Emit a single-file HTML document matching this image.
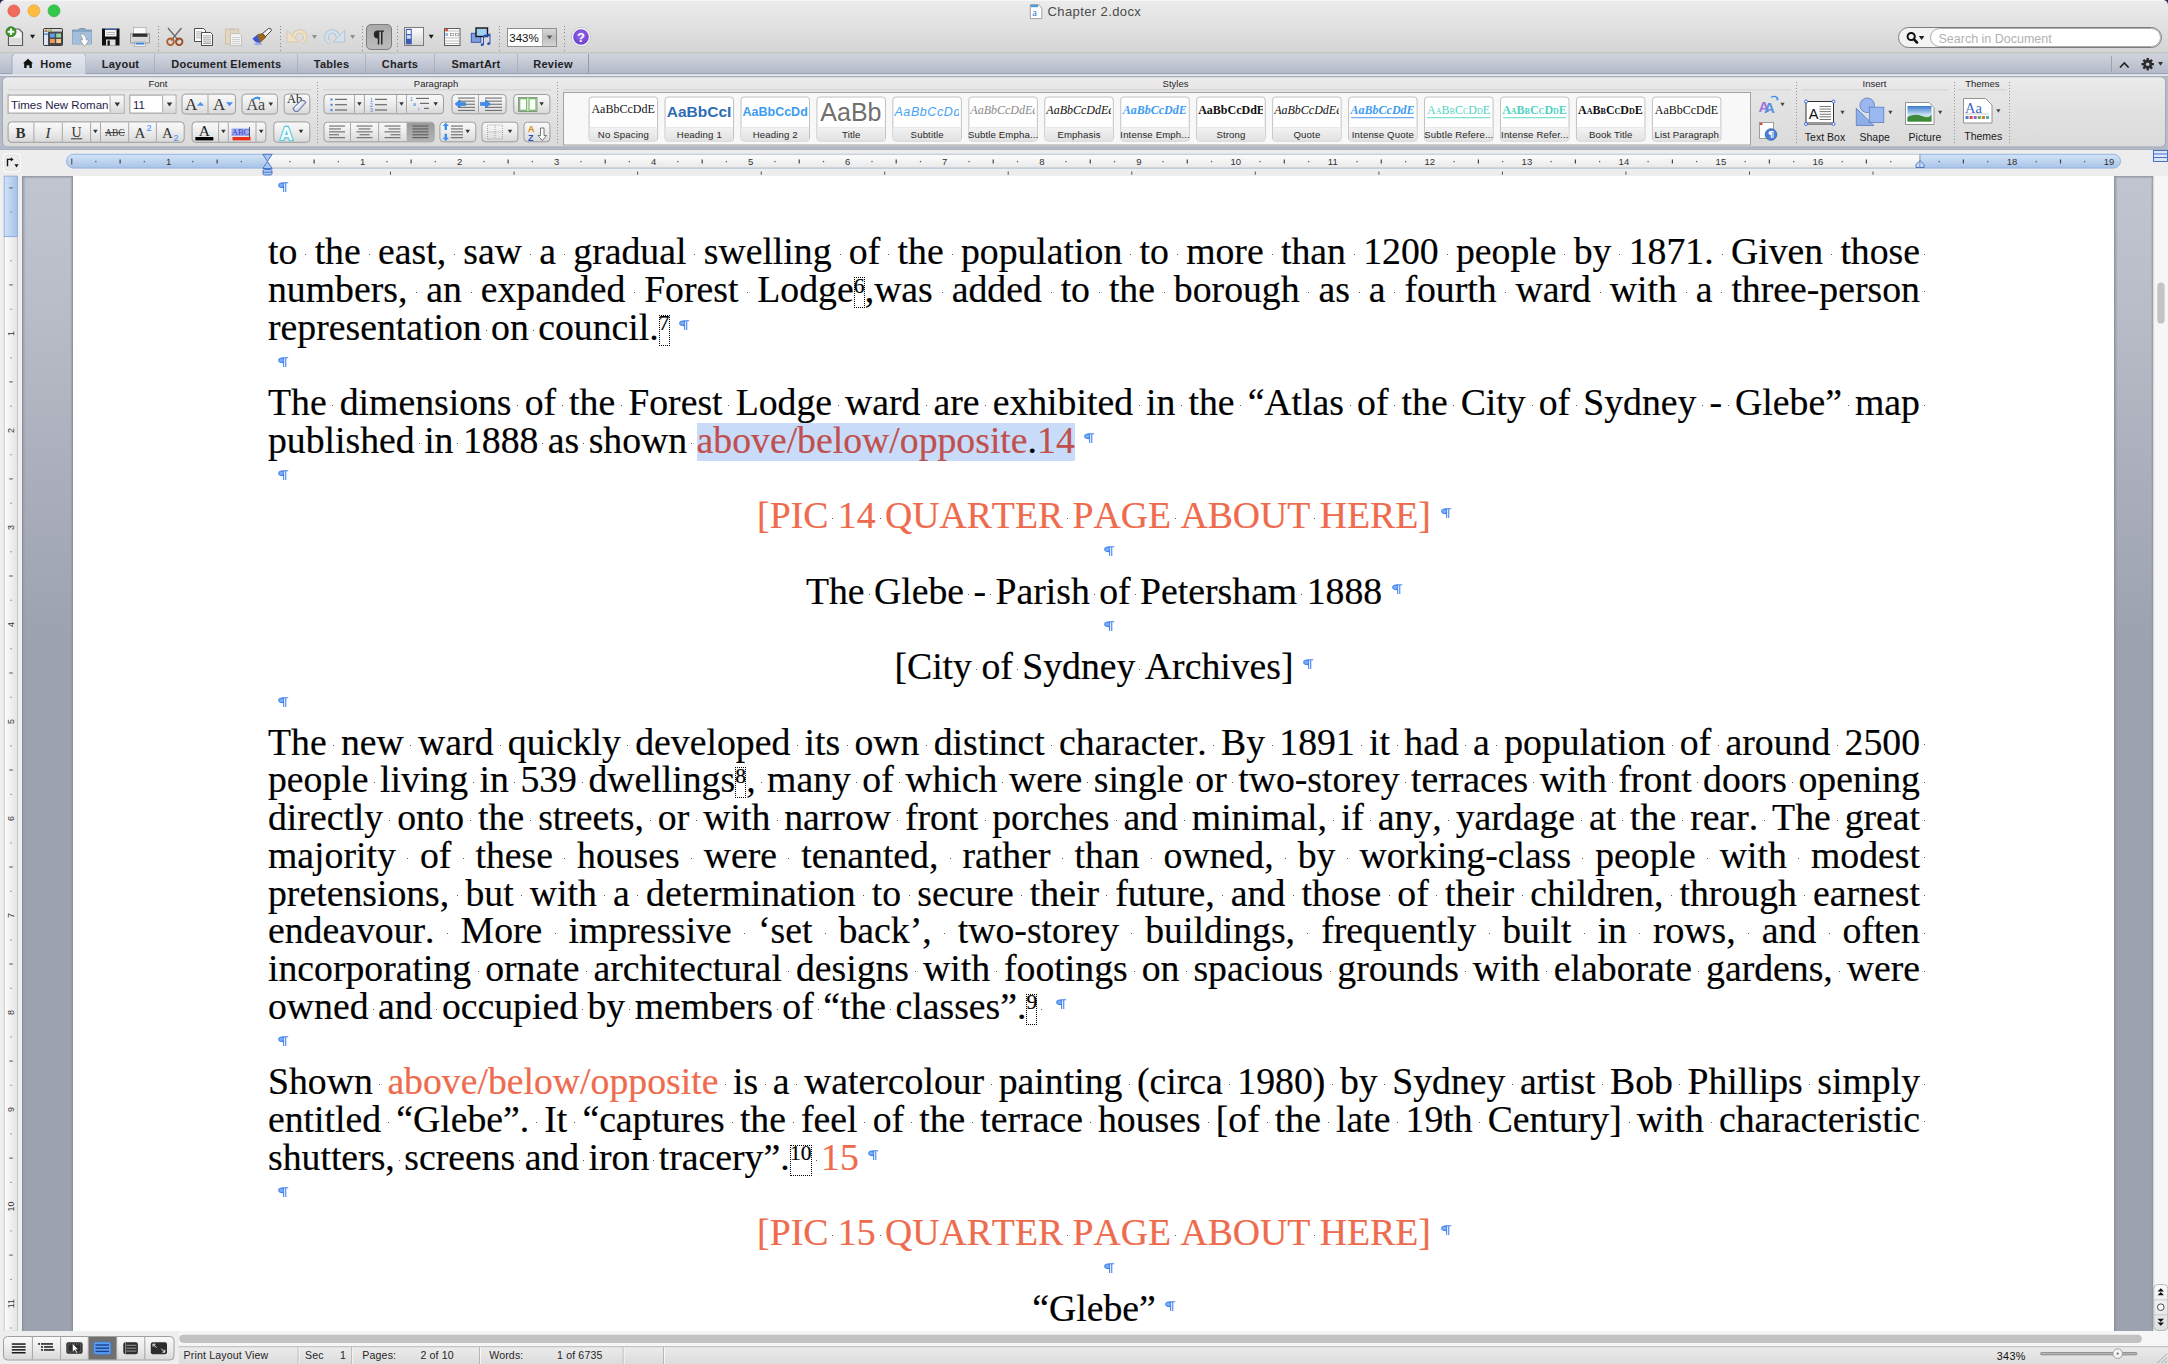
<!DOCTYPE html>
<html><head><meta charset="utf-8"><title>Chapter 2.docx</title>
<style>
*{box-sizing:border-box;margin:0;padding:0}
html,body{width:2168px;height:1364px;overflow:hidden;background:#fff}
body{position:relative;font-family:"Liberation Sans",sans-serif;color:#000}
.abs{position:absolute}
#top{position:absolute;left:0;top:0;width:2168px;height:54px;background:linear-gradient(#ececec,#e4e4e4 40%,#d3d3d3);border-bottom:1px solid #b4b4b4}
.tl{position:absolute;top:5px;width:12px;height:12px;border-radius:50%}
#title{position:absolute;top:3px;left:1047px;font-size:13px;color:#4a4a4a;letter-spacing:0.1px}
#tabs{position:absolute;left:0;top:54px;width:2168px;height:22px;background:linear-gradient(#d3d7df,#bcc1cd)}
.tab{position:absolute;top:0;height:20px;border:1px solid #a2a9b7;border-top:none;border-bottom:none;font-size:11px;font-weight:bold;color:#2b2b2b;text-align:center;line-height:20px;background:linear-gradient(#d8dce4,#bec3cf)}
.tab.act{background:linear-gradient(#e3e6ee,#cdd2dc);height:22px}
#rib{position:absolute;left:0;top:76px;width:2168px;height:74px;background:#b6bcc9;border-top:1px solid #aab1bf}
#panel{position:absolute;left:3px;top:1px;width:2162px;height:70px;border-radius:6px;border:1px solid #a8aebb;background:linear-gradient(#ececec,#e3e3e3 30%,#dcdcdc)}
.glab{position:absolute;top:2px;font-size:10.5px;color:#262626}
.gline{position:absolute;top:13px;height:1px;background:#cfcfcf}
.dsep{position:absolute;top:6px;height:62px;border-left:1px dotted #9c9c9c}
.btn{position:absolute;border:1px solid #a6a6a6;border-radius:4px;background:linear-gradient(#f8f8f8,#e9e9e9 50%,#d9d9d9);}
.dv{position:absolute;top:0;bottom:0;width:1px;background:#b3b3b3}
.combo{position:absolute;background:#fff;border:1px solid #a9a9a9;font-size:12px;color:#262658}
#ruler{position:absolute;left:0;top:150px;width:2168px;height:26px;background:#ededed}
#doc{position:absolute;left:0;top:176px;width:2168px;height:1156px;background:#fff;overflow:hidden}
#vrul{position:absolute;left:0;top:176px;width:22px;height:1156px;background:#efefef}
#gl{position:absolute;left:22px;top:176px;width:51px;height:1156px;background:linear-gradient(#c0c4cf,#a3a9b4);border-left:3px solid #9499a4;border-right:2px solid #9a9fab}
#gr{position:absolute;left:2114px;top:176px;width:39px;height:1156px;background:linear-gradient(#c0c4cf,#a3a9b4);border-left:3px solid #9499a4;border-right:2px solid #9a9fab}
#vscr{position:absolute;left:2153px;top:176px;width:15px;height:1156px;background:#f4f4f4;border-left:1px solid #dedede}
#status{position:absolute;left:0;top:1332px;width:2168px;height:32px;background:linear-gradient(#f1f1f1,#e4e4e4)}
.ln{-webkit-text-stroke:0.2px currentColor;font-kerning:none;position:absolute;left:268px;width:1652px;height:38px;line-height:38px;font-family:"Liberation Serif",serif;font-size:37.73px;white-space:nowrap;color:#000}
.lj{text-align:justify;text-align-last:justify;white-space:normal}
.lc{text-align:center;left:268px}
.cw{position:relative;display:inline-block}
.pma{position:absolute;left:100%;top:0;margin-left:11px}
.pm{display:inline-block;position:relative;width:11px;height:11px}
.pil{display:block;position:absolute}
.pm .pil{left:-0.3px;top:-9px}
.pma .pil{left:-1.3px;top:12px}
.pe{position:absolute;width:11px;height:11px}
.sp{background:linear-gradient(#5a5a5a,#5a5a5a) no-repeat;background-position:50% 23.8px;background-size:1.4px 1.4px}
.or{color:#ef6b4d}
.or2{color:#c0504d}
.sel{}
.fn{display:inline-block;position:relative;height:31px;vertical-align:-6px;outline:1px dotted #000;outline-offset:-1px;line-height:0}
.fn span{position:absolute;left:0;right:0;text-align:center;top:8.6px;font-size:21.5px}
</style></head><body>
<svg width="0" height="0" style="position:absolute"><defs>
<symbol id="pilc" viewBox="0 0 11 11"><path d="M5.6 0.3H10.2V1.3H8.3V10H7.2V1.3H6.2V10H5.1V6.2C2 6.2 0.1 5.1 0.1 3.2C0.1 1.3 2.3 0.3 5.6 0.3Z" fill="#4684ec"/><ellipse cx="3.3" cy="3.3" rx="2.1" ry="1.7" fill="#78adf8"/></symbol>
</defs></svg>
<svg class="abs" style="left:0;top:0" width="2168" height="176" viewBox="0 0 2168 176" font-family="Liberation Sans">
<defs>
<linearGradient id="gTop" x1="0" y1="0" x2="0" y2="1"><stop offset="0" stop-color="#ececec"/><stop offset="0.45" stop-color="#e2e2e2"/><stop offset="1" stop-color="#d4d4d4"/></linearGradient>
<linearGradient id="gPress" x1="0" y1="0" x2="0" y2="1"><stop offset="0" stop-color="#a9a9a9"/><stop offset="1" stop-color="#bcbcbc"/></linearGradient>
<linearGradient id="gSide" x1="0" y1="0" x2="0" y2="1"><stop offset="0" stop-color="#fff"/><stop offset="1" stop-color="#d4d4d4"/></linearGradient>
<linearGradient id="gZoomDD" x1="0" y1="0" x2="0" y2="1"><stop offset="0" stop-color="#d9d9d9"/><stop offset="0.5" stop-color="#bdbdbd"/><stop offset="1" stop-color="#d5d5d5"/></linearGradient>
<radialGradient id="gHelp" cx="0.5" cy="0.4" r="0.6"><stop offset="0" stop-color="#9b6cf0"/><stop offset="1" stop-color="#6a3ec9"/></radialGradient>
<linearGradient id="gTabBar" x1="0" y1="0" x2="0" y2="1"><stop offset="0" stop-color="#d1d5df"/><stop offset="1" stop-color="#afb5c4"/></linearGradient>
<linearGradient id="gTab" x1="0" y1="0" x2="0" y2="1"><stop offset="0" stop-color="#d3d7e1"/><stop offset="1" stop-color="#b1b7c6"/></linearGradient>
<linearGradient id="gTabA" x1="0" y1="0" x2="0" y2="1"><stop offset="0" stop-color="#e4e7ee"/><stop offset="1" stop-color="#cfd4de"/></linearGradient>
<linearGradient id="gPanel" x1="0" y1="0" x2="0" y2="1"><stop offset="0" stop-color="#ececec"/><stop offset="0.2" stop-color="#e6e6e6"/><stop offset="1" stop-color="#dadada"/></linearGradient>
<linearGradient id="gBtn" x1="0" y1="0" x2="0" y2="1"><stop offset="0" stop-color="#fafafa"/><stop offset="0.5" stop-color="#ececec"/><stop offset="1" stop-color="#d8d8d8"/></linearGradient>
<linearGradient id="gBtnA" x1="0" y1="0" x2="0" y2="1"><stop offset="0" stop-color="#9a9a9a"/><stop offset="1" stop-color="#b3b3b3"/></linearGradient>
<linearGradient id="gRulB" x1="0" y1="0" x2="0" y2="1"><stop offset="0" stop-color="#d3e4f8"/><stop offset="1" stop-color="#a9c3e7"/></linearGradient>
<linearGradient id="gRulW" x1="0" y1="0" x2="0" y2="1"><stop offset="0" stop-color="#fdfdfd"/><stop offset="1" stop-color="#e9e9e9"/></linearGradient>
<linearGradient id="gGray" x1="0" y1="0" x2="0" y2="1"><stop offset="0" stop-color="#c1c5cf"/><stop offset="1" stop-color="#9fa5b1"/></linearGradient>
<linearGradient id="gVRul" x1="0" y1="0" x2="1" y2="0"><stop offset="0" stop-color="#cfe2f8"/><stop offset="1" stop-color="#a6c1e6"/></linearGradient>
<linearGradient id="gLab" x1="0" y1="0" x2="0" y2="1"><stop offset="0" stop-color="#f3f3f3"/><stop offset="1" stop-color="#e2e2e2"/></linearGradient>
<linearGradient id="gPic" x1="0" y1="0" x2="0" y2="1"><stop offset="0" stop-color="#3a78c8"/><stop offset="0.6" stop-color="#cfe6f5"/><stop offset="1" stop-color="#6ab04a"/></linearGradient>
<linearGradient id="gStat" x1="0" y1="0" x2="0" y2="1"><stop offset="0" stop-color="#f0f0f0"/><stop offset="1" stop-color="#e2e2e2"/></linearGradient>
</defs>
<rect x="0" y="0" width="2168" height="53.5" fill="url(#gTop)"/>
<rect x="0" y="0" width="2168" height="1" fill="#f7f7f7"/>
<rect x="0" y="52.6" width="2168" height="1" fill="#adadad"/>
<path d="M0 0H4.5Q0.6 0.6 0 4.5Z" fill="#1f2350"/><path d="M2168 0H2163.5Q2167.4 0.6 2168 4.5Z" fill="#2a2a5a"/>
<circle cx="13.8" cy="10.9" r="5.9" fill="#f06c5c" stroke="#dc5040" stroke-width="0.7"/>
<circle cx="33.9" cy="10.8" r="6" fill="#fdbc40" stroke="#de9f34" stroke-width="0.6"/>
<circle cx="54" cy="10.8" r="6" fill="#34c84a" stroke="#27aa35" stroke-width="0.6"/>
<path d="M1030.3 4.6H1038.5L1041.8 8V18.6H1030.3Z" fill="#fff" stroke="#8a8a8a" stroke-width="0.8"/><rect x="1030.7" y="5" width="7.5" height="2.2" fill="#4a9ae0"/><text x="1032.3" y="16.3" font-family="Liberation Serif" font-size="10.5" fill="#3f7fd0">a</text>
<text x="1047.5" y="16" font-size="13" fill="#4b4b4b" letter-spacing="0.4">Chapter 2.docx</text>
<rect x="1898.5" y="27.5" width="263" height="20" rx="10" fill="#f3f3f3" stroke="#7c7c7c" stroke-width="1"/>
<rect x="1930.5" y="28.5" width="230" height="18" rx="9" fill="#fff" stroke="#9a9a9a" stroke-width="0.8"/>
<circle cx="1911.2" cy="36.5" r="3.6" fill="none" stroke="#111" stroke-width="2"/><path d="M1913.8 39.2L1917 42.5" stroke="#111" stroke-width="2.6" stroke-linecap="round"/>
<path d="M1918.8 36.0H1924.3999999999999L1921.6 40.0Z" fill="#222"/>
<text x="1938.5" y="43" font-size="12.5" fill="#b2b2b2">Search in Document</text>
<path d="M8.5 29H19L22.5 32.5V45.5H8.5Z" fill="#f4f4f4" stroke="#5a5a5a" stroke-width="1.2"/><path d="M9.5 38H21.5V44.5H9.5Z" fill="#dcdcdc"/><circle cx="11" cy="31.8" r="5" fill="#3f9a2a" stroke="#2b6e1c" stroke-width="0.8"/><path d="M10 28.5H12V30.8H14.3V32.8H12V35.1H10V32.8H7.7V30.8H10Z" fill="#fff"/><path d="M30.0 34.8H35.0L32.5 38.8Z" fill="#1a1a1a"/><rect x="43.5" y="28.5" width="19" height="17" rx="1" fill="#4a4a4a" stroke="#3a3a3a"/><rect x="44" y="29" width="18" height="2.6" fill="#d8d8d8"/><circle cx="46" cy="30.4" r="0.9" fill="#e24b2a"/><circle cx="48.5" cy="30.4" r="0.9" fill="#e8a020"/><circle cx="51" cy="30.4" r="0.9" fill="#4cae2c"/><rect x="44" y="32" width="4" height="13" fill="#dfe6f2"/><rect x="44" y="33.5" width="4" height="1.2" fill="#3a78d8"/><rect x="50" y="33.5" width="4.8" height="4" fill="#5a9ef0"/><rect x="56.2" y="33.5" width="4.8" height="4" fill="#8fd6a2"/><rect x="50" y="39" width="4.8" height="4" fill="#f09a5a"/><rect x="56.2" y="39" width="4.8" height="4" fill="#f5c98a"/><path d="M72.5 30H78L79.5 28.5H85L86 30H91.5V44H72.5Z" fill="#8aa9c9" stroke="#6f8fb0" stroke-width="0.8"/><path d="M72.5 32H91.5V44H72.5Z" fill="#a4bfdb"/><path d="M80 34C84 34 86 36 86.3 40H89L84.5 46.5L80 40H82.7C82.5 37.5 81.5 36 80 34Z" fill="#fff" stroke="#8b8b8b" stroke-width="0.6"/><path d="M102 28.5H119.5V45.5H102Z" fill="#111"/><rect x="105" y="28.5" width="11.5" height="8" fill="#f2f2f2"/><rect x="105" y="28.5" width="11.5" height="1.5" fill="#3b5aa0"/><rect x="106.5" y="32" width="8.5" height="0.8" fill="#aaa"/><rect x="106.5" y="34" width="8.5" height="0.8" fill="#aaa"/><rect x="106" y="39.5" width="9.5" height="6" fill="#e0e0e0"/><rect x="107.5" y="40.5" width="2.3" height="5" fill="#111"/><rect x="133.5" y="27.3" width="12.5" height="6" fill="#fafafa" stroke="#9a9a9a" stroke-width="0.6"/><path d="M130.5 33.5H149.5V43H130.5Z" fill="#d8d8d8" stroke="#8d8d8d" stroke-width="0.8"/><rect x="132.5" y="33.8" width="15" height="3" fill="#2e2e2e"/><rect x="134.5" y="42" width="11" height="4.2" fill="#fff" stroke="#8d8d8d" stroke-width="0.6"/><rect x="135.5" y="42.6" width="9" height="2" fill="#3a88d8"/><rect x="158" y="26" width="1" height="1.1" fill="#8a8a8a"/><rect x="158" y="29" width="1" height="1.1" fill="#8a8a8a"/><rect x="158" y="32" width="1" height="1.1" fill="#8a8a8a"/><rect x="158" y="36" width="1" height="1.1" fill="#8a8a8a"/><rect x="158" y="39" width="1" height="1.1" fill="#8a8a8a"/><rect x="158" y="43" width="1" height="1.1" fill="#8a8a8a"/><rect x="158" y="46" width="1" height="1.1" fill="#8a8a8a"/><rect x="158" y="50" width="1" height="1.1" fill="#8a8a8a"/><path d="M168 28L178.5 40.5M181.5 28L171 40.5" stroke="#6a6a6a" stroke-width="1.3"/><circle cx="170.5" cy="41.8" r="3.3" fill="none" stroke="#b5582a" stroke-width="1.8"/><circle cx="179.2" cy="41.8" r="3.3" fill="none" stroke="#9a4a22" stroke-width="1.8"/><path d="M194.5 28.5H203.5L205.5 30.5V41.5H194.5Z" fill="#fff" stroke="#3a3a3a" stroke-width="0.9"/><rect x="196" y="31.5" width="6" height="0.8" fill="#999"/><rect x="196" y="33.5" width="6" height="0.8" fill="#999"/><rect x="196" y="35.5" width="6" height="0.8" fill="#999"/><rect x="196" y="37.5" width="6" height="0.8" fill="#999"/><path d="M201.5 32.5H210.5L212.5 34.5V45.5H201.5Z" fill="#fff" stroke="#3a3a3a" stroke-width="0.9"/><rect x="203" y="35.5" width="8" height="0.8" fill="#888"/><rect x="203" y="37.5" width="8" height="0.8" fill="#888"/><rect x="203" y="39.5" width="8" height="0.8" fill="#888"/><rect x="203" y="41.5" width="8" height="0.8" fill="#888"/><rect x="203" y="43.2" width="8" height="0.8" fill="#888"/><rect x="225.3" y="29" width="13.5" height="15" fill="#e2d6bf" stroke="#c9bb9d" stroke-width="0.7"/><path d="M228.5 30.5H235.5L234.5 28.8H232.8L232 27.3L231.2 28.8H229.5Z" fill="#c8c8c8"/><path d="M230.5 33.5H239L241.5 36V45.5H230.5Z" fill="#f2f2f2" stroke="#b7b7b7" stroke-width="0.8"/><rect x="232" y="37" width="8" height="0.7" fill="#c3c3c3"/><rect x="232" y="39" width="8" height="0.7" fill="#c3c3c3"/><rect x="232" y="41" width="8" height="0.7" fill="#c3c3c3"/><rect x="232" y="43" width="8" height="0.7" fill="#c3c3c3"/><path d="M262.5 33.5L268.5 28.5Q271.5 28 271.5 30.5L265.5 36.5Z" fill="#f2f2f2" stroke="#333" stroke-width="0.9"/><path d="M257 35L262.5 33.5L266 37L260 42.5Z" fill="#9a6b1e" stroke="#5a3b10" stroke-width="0.6"/><path d="M252.5 38.5L257 35L260 42.5Q256 44 252.5 38.5Z" fill="#3a55d8"/><ellipse cx="258" cy="44" rx="4" ry="1.2" fill="#7a8ae8" opacity="0.6"/><rect x="280" y="26" width="1" height="1.1" fill="#8a8a8a"/><rect x="280" y="29" width="1" height="1.1" fill="#8a8a8a"/><rect x="280" y="32" width="1" height="1.1" fill="#8a8a8a"/><rect x="280" y="36" width="1" height="1.1" fill="#8a8a8a"/><rect x="280" y="39" width="1" height="1.1" fill="#8a8a8a"/><rect x="280" y="43" width="1" height="1.1" fill="#8a8a8a"/><rect x="280" y="46" width="1" height="1.1" fill="#8a8a8a"/><rect x="280" y="50" width="1" height="1.1" fill="#8a8a8a"/><path d="M294.2 38.3A5.6 5.6 0 1 1 302.3 42" fill="none" stroke="#d3c4a4" stroke-width="4.4"/><path d="M294.2 38.3A5.6 5.6 0 1 1 302.3 42" fill="none" stroke="#eee0c4" stroke-width="2.8"/><path d="M287 30.3V42H298.8Z" fill="#eee0c4" stroke="#d3c4a4" stroke-width="0.8" stroke-linejoin="round"/><path d="M312.0 35.0H317.0L314.5 39.0Z" fill="#8f8f8f"/><g transform="translate(631.8 0) scale(-1 1)"><path d="M294.2 38.3A5.6 5.6 0 1 1 302.3 42" fill="none" stroke="#a9bfd2" stroke-width="4.4"/><path d="M294.2 38.3A5.6 5.6 0 1 1 302.3 42" fill="none" stroke="#d3e2ee" stroke-width="2.8"/><path d="M287 30.3V42H298.8Z" fill="#d3e2ee" stroke="#a9bfd2" stroke-width="0.8" stroke-linejoin="round"/></g><path d="M350.1 35.0H355.1L352.6 39.0Z" fill="#8f8f8f"/><rect x="362" y="26" width="1" height="1.1" fill="#8a8a8a"/><rect x="362" y="29" width="1" height="1.1" fill="#8a8a8a"/><rect x="362" y="32" width="1" height="1.1" fill="#8a8a8a"/><rect x="362" y="36" width="1" height="1.1" fill="#8a8a8a"/><rect x="362" y="39" width="1" height="1.1" fill="#8a8a8a"/><rect x="362" y="43" width="1" height="1.1" fill="#8a8a8a"/><rect x="362" y="46" width="1" height="1.1" fill="#8a8a8a"/><rect x="362" y="50" width="1" height="1.1" fill="#8a8a8a"/><rect x="366.5" y="24.5" width="25" height="25" rx="4.5" fill="url(#gPress)" stroke="#7d7d7d" stroke-width="1"/><path d="M377.5 30.5H384V31.8H382.5V44.5H381V31.8H379.3V44.5H377.8V38.5Q373.8 38.5 373.8 34.5Q373.8 30.5 377.5 30.5Z" fill="#262626"/><rect x="397" y="26" width="1" height="1.1" fill="#8a8a8a"/><rect x="397" y="29" width="1" height="1.1" fill="#8a8a8a"/><rect x="397" y="32" width="1" height="1.1" fill="#8a8a8a"/><rect x="397" y="36" width="1" height="1.1" fill="#8a8a8a"/><rect x="397" y="39" width="1" height="1.1" fill="#8a8a8a"/><rect x="397" y="43" width="1" height="1.1" fill="#8a8a8a"/><rect x="397" y="46" width="1" height="1.1" fill="#8a8a8a"/><rect x="397" y="50" width="1" height="1.1" fill="#8a8a8a"/><rect x="404.5" y="27.5" width="19" height="18" fill="url(#gSide)" stroke="#7a7a7a" stroke-width="1"/><rect x="405.8" y="28.8" width="6" height="15.5" fill="#3d5db5"/><rect x="406.8" y="30" width="4" height="4" fill="#f2f4fa"/><rect x="406.8" y="35.2" width="4" height="3.5" fill="#d3dbef"/><path d="M428.7 34.8H433.7L431.2 38.8Z" fill="#1a1a1a"/><rect x="444.5" y="28.5" width="15.5" height="17" fill="#fff" stroke="#5d5d5d" stroke-width="1"/><rect x="445" y="30.5" width="14.5" height="1" fill="#bdbdbd"/><rect x="445" y="37.5" width="14.5" height="1" fill="#bdbdbd"/><rect x="445" y="40.5" width="14.5" height="1" fill="#bdbdbd"/><rect x="445" y="43" width="14.5" height="1" fill="#bdbdbd"/><rect x="445.3" y="29" width="2.6" height="2.2" fill="#e8451e"/><rect x="445.3" y="33" width="2.8" height="3" fill="#8fb8e8"/><rect x="450.5" y="33.3" width="3" height="2.5" fill="none" stroke="#777" stroke-width="0.6"/><rect x="455.5" y="33.3" width="3" height="2.5" fill="none" stroke="#777" stroke-width="0.6"/><rect x="471.3" y="33.3" width="9.5" height="9" fill="#7e9ee0" stroke="#2e4ea8" stroke-width="0.9"/><rect x="476" y="28" width="11.5" height="8.5" fill="#9fd0ef" stroke="#151515" stroke-width="1.4"/><path d="M486 34.5L490.5 33.5V43Q490.5 45 488.5 45Q486.8 45 487.2 43.5Q487.6 42 489.5 42.3V36L484 37.5V44.2Q484 46 482 46Q480.3 46 480.7 44.5Q481.2 43 483 43.3V35.5Z" fill="#2a4fb0"/><rect x="499" y="26" width="1" height="1.1" fill="#8a8a8a"/><rect x="499" y="29" width="1" height="1.1" fill="#8a8a8a"/><rect x="499" y="32" width="1" height="1.1" fill="#8a8a8a"/><rect x="499" y="36" width="1" height="1.1" fill="#8a8a8a"/><rect x="499" y="39" width="1" height="1.1" fill="#8a8a8a"/><rect x="499" y="43" width="1" height="1.1" fill="#8a8a8a"/><rect x="499" y="46" width="1" height="1.1" fill="#8a8a8a"/><rect x="499" y="50" width="1" height="1.1" fill="#8a8a8a"/><rect x="507.5" y="28.5" width="49" height="18" fill="#fff" stroke="#8e8e8e" stroke-width="1"/><rect x="542.5" y="29" width="13.5" height="17" fill="url(#gZoomDD)"/><rect x="542" y="29" width="1" height="17" fill="#b5b5b5"/><path d="M546.75 35.4H552.25L549.5 39.199999999999996Z" fill="#5a5a5a"/><text x="509.3" y="42" font-size="11.5" fill="#111">343%</text><rect x="564" y="26" width="1" height="1.1" fill="#8a8a8a"/><rect x="564" y="29" width="1" height="1.1" fill="#8a8a8a"/><rect x="564" y="32" width="1" height="1.1" fill="#8a8a8a"/><rect x="564" y="36" width="1" height="1.1" fill="#8a8a8a"/><rect x="564" y="39" width="1" height="1.1" fill="#8a8a8a"/><rect x="564" y="43" width="1" height="1.1" fill="#8a8a8a"/><rect x="564" y="46" width="1" height="1.1" fill="#8a8a8a"/><rect x="564" y="50" width="1" height="1.1" fill="#8a8a8a"/><circle cx="581" cy="37" r="9.6" fill="#fafafa" stroke="#bdbdbd" stroke-width="0.8"/><circle cx="581" cy="37" r="7.8" fill="url(#gHelp)"/><text x="581" y="41.6" font-size="13" font-weight="bold" fill="#fff" text-anchor="middle">?</text>
<rect x="0" y="53.5" width="2168" height="22.5" fill="url(#gTabBar)"/><path d="M12 75.5V56Q12 54 14 54H84Q86 54 86 56V75.5Z" fill="url(#gTabA)"/><path d="M12 75V56.5Q12 54.5 14 54.5M84 54.5Q86 54.5 86 56.5V75" fill="none" stroke="#a3aab9" stroke-width="1"/><text x="56.0" y="68" font-size="11" font-weight="bold" fill="#222" text-anchor="middle" letter-spacing="0.25">Home</text><rect x="86" y="54" width="69" height="19.5" fill="url(#gTab)"/><rect x="154.5" y="54" width="1" height="19.5" fill="#959cab"/><text x="120.5" y="68" font-size="11" font-weight="bold" fill="#222" text-anchor="middle" letter-spacing="0.25">Layout</text><rect x="155" y="54" width="142.5" height="19.5" fill="url(#gTab)"/><rect x="297.0" y="54" width="1" height="19.5" fill="#959cab"/><text x="226.25" y="68" font-size="11" font-weight="bold" fill="#222" text-anchor="middle" letter-spacing="0.25">Document Elements</text><rect x="297.5" y="54" width="68.0" height="19.5" fill="url(#gTab)"/><rect x="365.0" y="54" width="1" height="19.5" fill="#959cab"/><text x="331.5" y="68" font-size="11" font-weight="bold" fill="#222" text-anchor="middle" letter-spacing="0.25">Tables</text><rect x="365.5" y="54" width="69.0" height="19.5" fill="url(#gTab)"/><rect x="434.0" y="54" width="1" height="19.5" fill="#959cab"/><text x="400.0" y="68" font-size="11" font-weight="bold" fill="#222" text-anchor="middle" letter-spacing="0.25">Charts</text><rect x="434.5" y="54" width="83.0" height="19.5" fill="url(#gTab)"/><rect x="517.0" y="54" width="1" height="19.5" fill="#959cab"/><text x="476.0" y="68" font-size="11" font-weight="bold" fill="#222" text-anchor="middle" letter-spacing="0.25">SmartArt</text><rect x="517.5" y="54" width="71.0" height="19.5" fill="url(#gTab)"/><rect x="588.0" y="54" width="1" height="19.5" fill="#959cab"/><text x="553.0" y="68" font-size="11" font-weight="bold" fill="#222" text-anchor="middle" letter-spacing="0.25">Review</text><path d="M28 58.8L33 63.2H31.8V68H29.4V65.3H26.6V68H24.2V63.2H23Z" fill="#111"/><rect x="0" y="73" width="12" height="1.2" fill="#9ca3b6"/><rect x="86" y="73" width="2082" height="1.2" fill="#9ca3b6"/><rect x="0" y="74.2" width="2168" height="1.8" fill="#e4e6ee"/><rect x="2111" y="56" width="1" height="16" fill="#9ca3b1"/><path d="M2120 67.5L2124.3 63L2128.6 67.5" fill="none" stroke="#222" stroke-width="1.8"/><g transform="translate(2147.7 64.2)" fill="#2a2a2a"><rect x="-1.2" y="-6.2" width="2.4" height="3" transform="rotate(0)"/><rect x="-1.2" y="-6.2" width="2.4" height="3" transform="rotate(45)"/><rect x="-1.2" y="-6.2" width="2.4" height="3" transform="rotate(90)"/><rect x="-1.2" y="-6.2" width="2.4" height="3" transform="rotate(135)"/><rect x="-1.2" y="-6.2" width="2.4" height="3" transform="rotate(180)"/><rect x="-1.2" y="-6.2" width="2.4" height="3" transform="rotate(225)"/><rect x="-1.2" y="-6.2" width="2.4" height="3" transform="rotate(270)"/><rect x="-1.2" y="-6.2" width="2.4" height="3" transform="rotate(315)"/><circle r="4.4"/><circle r="1.8" fill="#c0c5d1"/></g><path d="M2158.0 61.9H2163.0L2160.5 65.7Z" fill="#333"/>
<rect x="0" y="76" width="2168" height="74" fill="#b5bbc8"/><rect x="0" y="76" width="2168" height="1" fill="#a8aebd"/><rect x="2.5" y="76.8" width="2163" height="70.2" rx="5" fill="url(#gPanel)" stroke="#a2a9b6" stroke-width="1"/><rect x="0" y="149" width="2168" height="1" fill="#a8afbd"/><text x="158" y="87.3" font-size="9.5" fill="#262626" text-anchor="middle">Font</text><rect x="8" y="89.3" width="303" height="1" fill="#d2d2d2"/><text x="436" y="87.3" font-size="9.5" fill="#262626" text-anchor="middle">Paragraph</text><rect x="323" y="89.3" width="228" height="1" fill="#d2d2d2"/><text x="1175.5" y="87.3" font-size="9.5" fill="#262626" text-anchor="middle">Styles</text><rect x="563" y="89.3" width="1228" height="1" fill="#d2d2d2"/><rect x="317" y="82" width="1" height="1.1" fill="#9a9a9a"/><rect x="317" y="85" width="1" height="1.1" fill="#9a9a9a"/><rect x="317" y="88" width="1" height="1.1" fill="#9a9a9a"/><rect x="317" y="91" width="1" height="1.1" fill="#9a9a9a"/><rect x="317" y="94" width="1" height="1.1" fill="#9a9a9a"/><rect x="317" y="97" width="1" height="1.1" fill="#9a9a9a"/><rect x="317" y="100" width="1" height="1.1" fill="#9a9a9a"/><rect x="317" y="103" width="1" height="1.1" fill="#9a9a9a"/><rect x="317" y="106" width="1" height="1.1" fill="#9a9a9a"/><rect x="317" y="109" width="1" height="1.1" fill="#9a9a9a"/><rect x="317" y="112" width="1" height="1.1" fill="#9a9a9a"/><rect x="317" y="115" width="1" height="1.1" fill="#9a9a9a"/><rect x="317" y="118" width="1" height="1.1" fill="#9a9a9a"/><rect x="317" y="121" width="1" height="1.1" fill="#9a9a9a"/><rect x="317" y="124" width="1" height="1.1" fill="#9a9a9a"/><rect x="317" y="127" width="1" height="1.1" fill="#9a9a9a"/><rect x="317" y="130" width="1" height="1.1" fill="#9a9a9a"/><rect x="317" y="133" width="1" height="1.1" fill="#9a9a9a"/><rect x="317" y="136" width="1" height="1.1" fill="#9a9a9a"/><rect x="317" y="139" width="1" height="1.1" fill="#9a9a9a"/><rect x="317" y="142" width="1" height="1.1" fill="#9a9a9a"/><rect x="557" y="82" width="1" height="1.1" fill="#9a9a9a"/><rect x="557" y="85" width="1" height="1.1" fill="#9a9a9a"/><rect x="557" y="88" width="1" height="1.1" fill="#9a9a9a"/><rect x="557" y="91" width="1" height="1.1" fill="#9a9a9a"/><rect x="557" y="94" width="1" height="1.1" fill="#9a9a9a"/><rect x="557" y="97" width="1" height="1.1" fill="#9a9a9a"/><rect x="557" y="100" width="1" height="1.1" fill="#9a9a9a"/><rect x="557" y="103" width="1" height="1.1" fill="#9a9a9a"/><rect x="557" y="106" width="1" height="1.1" fill="#9a9a9a"/><rect x="557" y="109" width="1" height="1.1" fill="#9a9a9a"/><rect x="557" y="112" width="1" height="1.1" fill="#9a9a9a"/><rect x="557" y="115" width="1" height="1.1" fill="#9a9a9a"/><rect x="557" y="118" width="1" height="1.1" fill="#9a9a9a"/><rect x="557" y="121" width="1" height="1.1" fill="#9a9a9a"/><rect x="557" y="124" width="1" height="1.1" fill="#9a9a9a"/><rect x="557" y="127" width="1" height="1.1" fill="#9a9a9a"/><rect x="557" y="130" width="1" height="1.1" fill="#9a9a9a"/><rect x="557" y="133" width="1" height="1.1" fill="#9a9a9a"/><rect x="557" y="136" width="1" height="1.1" fill="#9a9a9a"/><rect x="557" y="139" width="1" height="1.1" fill="#9a9a9a"/><rect x="557" y="142" width="1" height="1.1" fill="#9a9a9a"/><rect x="1796" y="82" width="1" height="1.1" fill="#9a9a9a"/><rect x="1796" y="85" width="1" height="1.1" fill="#9a9a9a"/><rect x="1796" y="88" width="1" height="1.1" fill="#9a9a9a"/><rect x="1796" y="91" width="1" height="1.1" fill="#9a9a9a"/><rect x="1796" y="94" width="1" height="1.1" fill="#9a9a9a"/><rect x="1796" y="97" width="1" height="1.1" fill="#9a9a9a"/><rect x="1796" y="100" width="1" height="1.1" fill="#9a9a9a"/><rect x="1796" y="103" width="1" height="1.1" fill="#9a9a9a"/><rect x="1796" y="106" width="1" height="1.1" fill="#9a9a9a"/><rect x="1796" y="109" width="1" height="1.1" fill="#9a9a9a"/><rect x="1796" y="112" width="1" height="1.1" fill="#9a9a9a"/><rect x="1796" y="115" width="1" height="1.1" fill="#9a9a9a"/><rect x="1796" y="118" width="1" height="1.1" fill="#9a9a9a"/><rect x="1796" y="121" width="1" height="1.1" fill="#9a9a9a"/><rect x="1796" y="124" width="1" height="1.1" fill="#9a9a9a"/><rect x="1796" y="127" width="1" height="1.1" fill="#9a9a9a"/><rect x="1796" y="130" width="1" height="1.1" fill="#9a9a9a"/><rect x="1796" y="133" width="1" height="1.1" fill="#9a9a9a"/><rect x="1796" y="136" width="1" height="1.1" fill="#9a9a9a"/><rect x="1796" y="139" width="1" height="1.1" fill="#9a9a9a"/><rect x="1796" y="142" width="1" height="1.1" fill="#9a9a9a"/><rect x="1954" y="82" width="1" height="1.1" fill="#9a9a9a"/><rect x="1954" y="85" width="1" height="1.1" fill="#9a9a9a"/><rect x="1954" y="88" width="1" height="1.1" fill="#9a9a9a"/><rect x="1954" y="91" width="1" height="1.1" fill="#9a9a9a"/><rect x="1954" y="94" width="1" height="1.1" fill="#9a9a9a"/><rect x="1954" y="97" width="1" height="1.1" fill="#9a9a9a"/><rect x="1954" y="100" width="1" height="1.1" fill="#9a9a9a"/><rect x="1954" y="103" width="1" height="1.1" fill="#9a9a9a"/><rect x="1954" y="106" width="1" height="1.1" fill="#9a9a9a"/><rect x="1954" y="109" width="1" height="1.1" fill="#9a9a9a"/><rect x="1954" y="112" width="1" height="1.1" fill="#9a9a9a"/><rect x="1954" y="115" width="1" height="1.1" fill="#9a9a9a"/><rect x="1954" y="118" width="1" height="1.1" fill="#9a9a9a"/><rect x="1954" y="121" width="1" height="1.1" fill="#9a9a9a"/><rect x="1954" y="124" width="1" height="1.1" fill="#9a9a9a"/><rect x="1954" y="127" width="1" height="1.1" fill="#9a9a9a"/><rect x="1954" y="130" width="1" height="1.1" fill="#9a9a9a"/><rect x="1954" y="133" width="1" height="1.1" fill="#9a9a9a"/><rect x="1954" y="136" width="1" height="1.1" fill="#9a9a9a"/><rect x="1954" y="139" width="1" height="1.1" fill="#9a9a9a"/><rect x="1954" y="142" width="1" height="1.1" fill="#9a9a9a"/><rect x="2009" y="82" width="1" height="1.1" fill="#9a9a9a"/><rect x="2009" y="85" width="1" height="1.1" fill="#9a9a9a"/><rect x="2009" y="88" width="1" height="1.1" fill="#9a9a9a"/><rect x="2009" y="91" width="1" height="1.1" fill="#9a9a9a"/><rect x="2009" y="94" width="1" height="1.1" fill="#9a9a9a"/><rect x="2009" y="97" width="1" height="1.1" fill="#9a9a9a"/><rect x="2009" y="100" width="1" height="1.1" fill="#9a9a9a"/><rect x="2009" y="103" width="1" height="1.1" fill="#9a9a9a"/><rect x="2009" y="106" width="1" height="1.1" fill="#9a9a9a"/><rect x="2009" y="109" width="1" height="1.1" fill="#9a9a9a"/><rect x="2009" y="112" width="1" height="1.1" fill="#9a9a9a"/><rect x="2009" y="115" width="1" height="1.1" fill="#9a9a9a"/><rect x="2009" y="118" width="1" height="1.1" fill="#9a9a9a"/><rect x="2009" y="121" width="1" height="1.1" fill="#9a9a9a"/><rect x="2009" y="124" width="1" height="1.1" fill="#9a9a9a"/><rect x="2009" y="127" width="1" height="1.1" fill="#9a9a9a"/><rect x="2009" y="130" width="1" height="1.1" fill="#9a9a9a"/><rect x="2009" y="133" width="1" height="1.1" fill="#9a9a9a"/><rect x="2009" y="136" width="1" height="1.1" fill="#9a9a9a"/><rect x="2009" y="139" width="1" height="1.1" fill="#9a9a9a"/><rect x="2009" y="142" width="1" height="1.1" fill="#9a9a9a"/><rect x="8.1" y="95.1" width="115.9" height="18.0" fill="#fff" stroke="#9a9a9a"/><rect x="110" y="95.6" width="13.5" height="17.0" fill="url(#gBtn)"/><rect x="109.5" y="95.6" width="1" height="17.0" fill="#b0b0b0"/><path d="M114.5 102.6H120.0L117.25 106.6Z" fill="#333"/><text x="11.1" y="108.6" font-size="11.5" fill="#1d1d4a">Times New Roman</text><rect x="129.9" y="95.1" width="46.0" height="18.0" fill="#fff" stroke="#9a9a9a"/><rect x="162.6" y="95.6" width="12.800000000000011" height="17.0" fill="url(#gBtn)"/><rect x="162.1" y="95.6" width="1" height="17.0" fill="#b0b0b0"/><path d="M166.75 102.6H172.25L169.5 106.6Z" fill="#333"/><text x="132.9" y="108.6" font-size="11.5" fill="#1d1d4a">11</text><rect x="182.0" y="94.1" width="53.5" height="20.0" rx="3.5" fill="url(#gBtn)" stroke="#9d9d9d" stroke-width="1"/><rect x="207.5" y="94.6" width="1" height="19.0" fill="#a8a8a8"/><text x="185" y="110.3" font-family="Liberation Serif" font-size="17" fill="#333">A</text><path d="M197 105.8L200.5 102L204 105.8Z" fill="#4a90ec"/><text x="213" y="110.3" font-family="Liberation Serif" font-size="17" fill="#333">A</text><path d="M226 102.3H233L229.5 106.2Z" fill="#4a90ec"/><rect x="242.0" y="94.1" width="35.5" height="20.0" rx="3.5" fill="url(#gBtn)" stroke="#9d9d9d" stroke-width="1"/><text x="246.5" y="110.3" font-family="Liberation Serif" font-size="16" fill="#444">Aa</text><path d="M252.5 100Q256 96.5 259.5 98.5" fill="none" stroke="#3d8ef0" stroke-width="1.8"/><path d="M257.3 96.6L260.5 97.4L259.3 101Z" fill="#3d8ef0"/><path d="M268.55 102.5H273.05L270.8 106.1Z" fill="#333"/><rect x="284.2" y="94.1" width="25.600000000000023" height="20.0" rx="3.5" fill="url(#gBtn)" stroke="#9d9d9d" stroke-width="1"/><text x="287" y="103.3" font-family="Liberation Serif" font-size="12.5" fill="#222">Ab</text><path d="M293.2 108.5L301 100.8Q304.3 99.3 305.8 102.5L298 111Q294.5 112.8 293.2 108.5Z" fill="#dde3f2" stroke="#6d7aa8" stroke-width="1.1"/><path d="M295 108.3L301.5 102" stroke="#fff" stroke-width="1.3"/><rect x="8.1" y="121.9" width="176.1" height="20.400000000000006" rx="3.5" fill="url(#gBtn)" stroke="#9d9d9d" stroke-width="1"/><rect x="33.4" y="122.4" width="1" height="19.400000000000006" fill="#a8a8a8"/><rect x="61.8" y="122.4" width="1" height="19.400000000000006" fill="#a8a8a8"/><rect x="90.1" y="122.4" width="1" height="19.400000000000006" fill="#a8a8a8"/><rect x="100.0" y="122.4" width="1" height="19.400000000000006" fill="#a8a8a8"/><rect x="128.2" y="122.4" width="1" height="19.400000000000006" fill="#a8a8a8"/><rect x="155.9" y="122.4" width="1" height="19.400000000000006" fill="#a8a8a8"/><text x="20.5" y="137.5" font-family="Liberation Serif" font-size="15" font-weight="bold" fill="#333" text-anchor="middle">B</text><text x="48" y="137.5" font-family="Liberation Serif" font-size="15" font-style="italic" fill="#333" text-anchor="middle">I</text><text x="76.5" y="136.5" font-family="Liberation Serif" font-size="14" fill="#333" text-anchor="middle">U</text><rect x="71" y="138.3" width="11.2" height="1" fill="#333"/><path d="M93.15 129.7H97.65L95.4 133.3Z" fill="#333"/><text x="114.8" y="136" font-family="Liberation Serif" font-size="9.5" fill="#333" text-anchor="middle">ABC</text><rect x="105" y="132.2" width="20" height="0.9" fill="#333"/><text x="140" y="138" font-family="Liberation Serif" font-size="15" fill="#333" text-anchor="middle">A</text><text x="146.5" y="130.5" font-size="9" fill="#3d8ef0">2</text><text x="167.5" y="138" font-family="Liberation Serif" font-size="15" fill="#333" text-anchor="middle">A</text><text x="173.5" y="140.5" font-size="9" fill="#3d8ef0">2</text><rect x="192.1" y="121.9" width="73.79999999999998" height="20.400000000000006" rx="3.5" fill="url(#gBtn)" stroke="#9d9d9d" stroke-width="1"/><rect x="218.1" y="122.4" width="1" height="19.400000000000006" fill="#a8a8a8"/><rect x="227.8" y="122.4" width="1" height="19.400000000000006" fill="#a8a8a8"/><rect x="255.5" y="122.4" width="1" height="19.400000000000006" fill="#a8a8a8"/><text x="204.3" y="135.8" font-family="Liberation Serif" font-size="15.5" fill="#222" text-anchor="middle">A</text><rect x="195.3" y="137" width="18" height="3.4" fill="#000"/><path d="M221.15 129.7H225.65L223.4 133.3Z" fill="#333"/><rect x="231.5" y="128.5" width="18" height="7.5" fill="#9eaef5"/><text x="240.5" y="134.8" font-family="Liberation Serif" font-size="8.5" fill="#3040c0" text-anchor="middle">ABC</text><rect x="232.5" y="137" width="18" height="3.4" fill="#e8301c"/><rect x="249" y="127" width="0.8" height="10" fill="#333"/><path d="M258.95 129.7H263.45L261.2 133.3Z" fill="#333"/><rect x="273.8" y="121.9" width="36.0" height="20.400000000000006" rx="3.5" fill="url(#gBtn)" stroke="#9d9d9d" stroke-width="1"/><text x="286.3" y="139.5" font-size="17.5" font-weight="bold" fill="#fff" stroke="#5cd0e2" stroke-width="2.6" paint-order="stroke" text-anchor="middle">A</text><path d="M298.75 129.7H303.25L301 133.3Z" fill="#333"/><rect x="324.0" y="94.5" width="119.5" height="19.299999999999997" rx="3.5" fill="url(#gBtn)" stroke="#9d9d9d" stroke-width="1"/><rect x="354.0" y="95" width="1" height="18.299999999999997" fill="#a8a8a8"/><rect x="363.9" y="95" width="1" height="18.299999999999997" fill="#a8a8a8"/><rect x="396.1" y="95" width="1" height="18.299999999999997" fill="#a8a8a8"/><rect x="406.0" y="95" width="1" height="18.299999999999997" fill="#a8a8a8"/><rect x="330.5" y="98.5" width="2" height="2" fill="#3d7ee8"/><rect x="335" y="98.8" width="12" height="1.2" fill="#6d6d6d"/><rect x="330.5" y="103.8" width="2" height="2" fill="#3d7ee8"/><rect x="335" y="104.1" width="12" height="1.2" fill="#6d6d6d"/><rect x="330.5" y="109.1" width="2" height="2" fill="#3d7ee8"/><rect x="335" y="109.4" width="12" height="1.2" fill="#6d6d6d"/><path d="M357.15 102.2H361.65L359.4 105.8Z" fill="#333"/><text x="370" y="101.5" font-size="5" fill="#3d7ee8">1</text><rect x="375" y="98.8" width="12" height="1.2" fill="#6d6d6d"/><text x="370" y="106.8" font-size="5" fill="#3d7ee8">2</text><rect x="375" y="104.1" width="12" height="1.2" fill="#6d6d6d"/><text x="370" y="112.1" font-size="5" fill="#3d7ee8">3</text><rect x="375" y="109.4" width="12" height="1.2" fill="#6d6d6d"/><path d="M399.25 102.2H403.75L401.5 105.8Z" fill="#333"/><text x="410" y="101" font-size="5" fill="#3d7ee8">1</text><text x="413" y="106" font-size="5" fill="#3d7ee8">a</text><text x="418" y="111" font-size="5" fill="#3d7ee8">i</text><rect x="416" y="97.8" width="13" height="1.2" fill="#6d6d6d"/><rect x="420" y="102.8" width="9" height="1.2" fill="#6d6d6d"/><rect x="424" y="107.8" width="5" height="1.2" fill="#6d6d6d"/><path d="M433.45 102.2H437.95L435.7 105.8Z" fill="#333"/><rect x="452.0" y="94.5" width="54.10000000000002" height="19.299999999999997" rx="3.5" fill="url(#gBtn)" stroke="#9d9d9d" stroke-width="1"/><rect x="478.0" y="95" width="1" height="18.299999999999997" fill="#a8a8a8"/><rect x="458" y="97.50" width="17" height="1.1" fill="#707070"/><rect x="458" y="100.60" width="17" height="1.1" fill="#707070"/><rect x="458" y="103.70" width="17" height="1.1" fill="#707070"/><rect x="458" y="106.80" width="17" height="1.1" fill="#707070"/><rect x="458" y="109.90" width="17" height="1.1" fill="#707070"/><path d="M455 103.9L460 99.8V102.4H465.5V105.4H460V108Z" fill="#3d8ef0" stroke="#2a63c0" stroke-width="0.5"/><rect x="485" y="97.50" width="17" height="1.1" fill="#707070"/><rect x="485" y="100.60" width="17" height="1.1" fill="#707070"/><rect x="485" y="103.70" width="17" height="1.1" fill="#707070"/><rect x="485" y="106.80" width="17" height="1.1" fill="#707070"/><rect x="485" y="109.90" width="17" height="1.1" fill="#707070"/><path d="M490.5 103.9L485.5 99.8V102.4H480.5V105.4H485.5V108Z" fill="#3d8ef0" stroke="#2a63c0" stroke-width="0.5"/><rect x="513.7" y="94.5" width="36.19999999999993" height="19.299999999999997" rx="3.5" fill="url(#gBtn)" stroke="#9d9d9d" stroke-width="1"/><rect x="518.5" y="97.5" width="18.5" height="14" fill="#fff" stroke="#6a6a6a" stroke-width="0.7"/><rect x="519.7" y="98.7" width="7" height="11.6" fill="none" stroke="#5cb548" stroke-width="1.1"/><rect x="529" y="98.7" width="7" height="11.6" fill="none" stroke="#5cb548" stroke-width="1.1"/><path d="M539.35 102.2H543.85L541.6 105.8Z" fill="#333"/><rect x="324.0" y="122.2" width="110.19999999999999" height="19.60000000000001" rx="3.5" fill="url(#gBtn)" stroke="#9d9d9d" stroke-width="1"/><path d="M406.6 122.7H431.7Q434.2 122.7 434.2 125.7V138.3Q434.2 141.3 431.7 141.3H406.6Z" fill="url(#gBtnA)"/><rect x="350.0" y="122.7" width="1" height="18.60000000000001" fill="#a8a8a8"/><rect x="378.1" y="122.7" width="1" height="18.60000000000001" fill="#a8a8a8"/><rect x="329" y="125.50" width="16" height="1.1" fill="#6a6a6a"/><rect x="329" y="128.40" width="12" height="1.1" fill="#6a6a6a"/><rect x="329" y="131.30" width="16" height="1.1" fill="#6a6a6a"/><rect x="329" y="134.20" width="10" height="1.1" fill="#6a6a6a"/><rect x="329" y="137.10" width="16" height="1.1" fill="#6a6a6a"/><rect x="356.5" y="125.50" width="16" height="1.1" fill="#6a6a6a"/><rect x="358.5" y="128.40" width="12" height="1.1" fill="#6a6a6a"/><rect x="356.5" y="131.30" width="16" height="1.1" fill="#6a6a6a"/><rect x="359.5" y="134.20" width="10" height="1.1" fill="#6a6a6a"/><rect x="356.5" y="137.10" width="16" height="1.1" fill="#6a6a6a"/><rect x="384.5" y="125.50" width="16" height="1.1" fill="#6a6a6a"/><rect x="388.5" y="128.40" width="12" height="1.1" fill="#6a6a6a"/><rect x="384.5" y="131.30" width="16" height="1.1" fill="#6a6a6a"/><rect x="390.5" y="134.20" width="10" height="1.1" fill="#6a6a6a"/><rect x="384.5" y="137.10" width="16" height="1.1" fill="#6a6a6a"/><rect x="412.5" y="125.50" width="16" height="1.1" fill="#5a5a5a"/><rect x="412.5" y="128.40" width="16" height="1.1" fill="#5a5a5a"/><rect x="412.5" y="131.30" width="16" height="1.1" fill="#5a5a5a"/><rect x="412.5" y="134.20" width="16" height="1.1" fill="#5a5a5a"/><rect x="412.5" y="137.10" width="16" height="1.1" fill="#5a5a5a"/><rect x="439.9" y="122.2" width="35.900000000000034" height="19.60000000000001" rx="3.5" fill="url(#gBtn)" stroke="#9d9d9d" stroke-width="1"/><path d="M445.8 122.8L449 126H447V130H444.6V126H442.6Z" fill="#3d8ef0"/><path d="M445.8 141L449 137.8H447V133.8H444.6V137.8H442.6Z" fill="#3d8ef0"/><rect x="451" y="125.50" width="12" height="1.1" fill="#6a6a6a"/><rect x="451" y="128.40" width="12" height="1.1" fill="#6a6a6a"/><rect x="451" y="131.30" width="12" height="1.1" fill="#6a6a6a"/><rect x="451" y="134.20" width="12" height="1.1" fill="#6a6a6a"/><rect x="451" y="137.10" width="12" height="1.1" fill="#6a6a6a"/><path d="M465.45 129.7H469.95L467.7 133.3Z" fill="#333"/><rect x="482.0" y="122.2" width="35.89999999999998" height="19.60000000000001" rx="3.5" fill="url(#gBtn)" stroke="#9d9d9d" stroke-width="1"/><rect x="487.5" y="125" width="15" height="14" fill="none" stroke="#999" stroke-width="0.8" stroke-dasharray="1 1"/><path d="M495 125V139M487.5 132H502.5" stroke="#999" stroke-width="0.8" stroke-dasharray="1 1"/><path d="M507.75 129.7H512.25L510 133.3Z" fill="#333"/><rect x="524.0" y="122.2" width="25.899999999999977" height="19.60000000000001" rx="3.5" fill="url(#gBtn)" stroke="#9d9d9d" stroke-width="1"/><text x="528" y="132" font-size="9" font-weight="bold" fill="#d88a10">A</text><text x="528" y="141" font-size="9" font-weight="bold" fill="#2a50c8">Z</text><path d="M540.5 128V135.5H538L542.3 140.5L546.5 135.5H544V128Z" fill="#fff" stroke="#555" stroke-width="0.8"/><rect x="563.5" y="92.5" width="1187" height="52.5" fill="#f8f8f8" stroke="#a3a3a3" stroke-width="1"/><rect x="589.10" y="97" width="68.5" height="44" rx="3" fill="#fff" stroke="#c2c2c2" stroke-width="1"/><rect x="589.60" y="127" width="67.5" height="13.5" fill="url(#gLab)"/><rect x="589.60" y="127" width="67.5" height="0.8" fill="#e6e6e6"/><text x="623.40" y="138.3" font-size="9.6" fill="#262626" text-anchor="middle" letter-spacing="0.15">No Spacing</text><rect x="665.05" y="97" width="68.5" height="44" rx="3" fill="#fff" stroke="#c2c2c2" stroke-width="1"/><rect x="665.55" y="127" width="67.5" height="13.5" fill="url(#gLab)"/><rect x="665.55" y="127" width="67.5" height="0.8" fill="#e6e6e6"/><text x="699.35" y="138.3" font-size="9.6" fill="#262626" text-anchor="middle" letter-spacing="0.15">Heading 1</text><rect x="741.00" y="97" width="68.5" height="44" rx="3" fill="#fff" stroke="#c2c2c2" stroke-width="1"/><rect x="741.50" y="127" width="67.5" height="13.5" fill="url(#gLab)"/><rect x="741.50" y="127" width="67.5" height="0.8" fill="#e6e6e6"/><text x="775.30" y="138.3" font-size="9.6" fill="#262626" text-anchor="middle" letter-spacing="0.15">Heading 2</text><rect x="816.95" y="97" width="68.5" height="44" rx="3" fill="#fff" stroke="#c2c2c2" stroke-width="1"/><rect x="817.45" y="127" width="67.5" height="13.5" fill="url(#gLab)"/><rect x="817.45" y="127" width="67.5" height="0.8" fill="#e6e6e6"/><text x="851.25" y="138.3" font-size="9.6" fill="#262626" text-anchor="middle" letter-spacing="0.15">Title</text><rect x="892.90" y="97" width="68.5" height="44" rx="3" fill="#fff" stroke="#c2c2c2" stroke-width="1"/><rect x="893.40" y="127" width="67.5" height="13.5" fill="url(#gLab)"/><rect x="893.40" y="127" width="67.5" height="0.8" fill="#e6e6e6"/><text x="927.20" y="138.3" font-size="9.6" fill="#262626" text-anchor="middle" letter-spacing="0.15">Subtitle</text><rect x="968.85" y="97" width="68.5" height="44" rx="3" fill="#fff" stroke="#c2c2c2" stroke-width="1"/><rect x="969.35" y="127" width="67.5" height="13.5" fill="url(#gLab)"/><rect x="969.35" y="127" width="67.5" height="0.8" fill="#e6e6e6"/><text x="1003.15" y="138.3" font-size="9.6" fill="#262626" text-anchor="middle" letter-spacing="0.15">Subtle Empha...</text><rect x="1044.80" y="97" width="68.5" height="44" rx="3" fill="#fff" stroke="#c2c2c2" stroke-width="1"/><rect x="1045.30" y="127" width="67.5" height="13.5" fill="url(#gLab)"/><rect x="1045.30" y="127" width="67.5" height="0.8" fill="#e6e6e6"/><text x="1079.10" y="138.3" font-size="9.6" fill="#262626" text-anchor="middle" letter-spacing="0.15">Emphasis</text><rect x="1120.75" y="97" width="68.5" height="44" rx="3" fill="#fff" stroke="#c2c2c2" stroke-width="1"/><rect x="1121.25" y="127" width="67.5" height="13.5" fill="url(#gLab)"/><rect x="1121.25" y="127" width="67.5" height="0.8" fill="#e6e6e6"/><text x="1155.05" y="138.3" font-size="9.6" fill="#262626" text-anchor="middle" letter-spacing="0.15">Intense Emph...</text><rect x="1196.70" y="97" width="68.5" height="44" rx="3" fill="#fff" stroke="#c2c2c2" stroke-width="1"/><rect x="1197.20" y="127" width="67.5" height="13.5" fill="url(#gLab)"/><rect x="1197.20" y="127" width="67.5" height="0.8" fill="#e6e6e6"/><text x="1231.00" y="138.3" font-size="9.6" fill="#262626" text-anchor="middle" letter-spacing="0.15">Strong</text><rect x="1272.65" y="97" width="68.5" height="44" rx="3" fill="#fff" stroke="#c2c2c2" stroke-width="1"/><rect x="1273.15" y="127" width="67.5" height="13.5" fill="url(#gLab)"/><rect x="1273.15" y="127" width="67.5" height="0.8" fill="#e6e6e6"/><text x="1306.95" y="138.3" font-size="9.6" fill="#262626" text-anchor="middle" letter-spacing="0.15">Quote</text><rect x="1348.60" y="97" width="68.5" height="44" rx="3" fill="#fff" stroke="#c2c2c2" stroke-width="1"/><rect x="1349.10" y="127" width="67.5" height="13.5" fill="url(#gLab)"/><rect x="1349.10" y="127" width="67.5" height="0.8" fill="#e6e6e6"/><text x="1382.90" y="138.3" font-size="9.6" fill="#262626" text-anchor="middle" letter-spacing="0.15">Intense Quote</text><rect x="1351.10" y="117.3" width="63" height="0.9" fill="#3d8ef0"/><rect x="1424.55" y="97" width="68.5" height="44" rx="3" fill="#fff" stroke="#c2c2c2" stroke-width="1"/><rect x="1425.05" y="127" width="67.5" height="13.5" fill="url(#gLab)"/><rect x="1425.05" y="127" width="67.5" height="0.8" fill="#e6e6e6"/><text x="1458.85" y="138.3" font-size="9.6" fill="#262626" text-anchor="middle" letter-spacing="0.15">Subtle Refere...</text><rect x="1427.05" y="117.3" width="63" height="0.9" fill="#4fd4bf"/><rect x="1500.50" y="97" width="68.5" height="44" rx="3" fill="#fff" stroke="#c2c2c2" stroke-width="1"/><rect x="1501.00" y="127" width="67.5" height="13.5" fill="url(#gLab)"/><rect x="1501.00" y="127" width="67.5" height="0.8" fill="#e6e6e6"/><text x="1534.80" y="138.3" font-size="9.6" fill="#262626" text-anchor="middle" letter-spacing="0.15">Intense Refer...</text><rect x="1503.00" y="117.3" width="63" height="0.9" fill="#4fd4bf"/><rect x="1576.45" y="97" width="68.5" height="44" rx="3" fill="#fff" stroke="#c2c2c2" stroke-width="1"/><rect x="1576.95" y="127" width="67.5" height="13.5" fill="url(#gLab)"/><rect x="1576.95" y="127" width="67.5" height="0.8" fill="#e6e6e6"/><text x="1610.75" y="138.3" font-size="9.6" fill="#262626" text-anchor="middle" letter-spacing="0.15">Book Title</text><rect x="1652.40" y="97" width="68.5" height="44" rx="3" fill="#fff" stroke="#c2c2c2" stroke-width="1"/><rect x="1652.90" y="127" width="67.5" height="13.5" fill="url(#gLab)"/><rect x="1652.90" y="127" width="67.5" height="0.8" fill="#e6e6e6"/><text x="1686.70" y="138.3" font-size="9.6" fill="#262626" text-anchor="middle" letter-spacing="0.15">List Paragraph</text><text x="1758.5" y="112" font-size="15" font-weight="bold" fill="#9a6ad8" opacity="0.9">A</text><text x="1764" y="113" font-size="15" font-weight="bold" fill="#5b8de0">A</text><path d="M1771 97.5Q1775 95 1778 98.5" fill="none" stroke="#3d8ef0" stroke-width="1.2"/><path d="M1776.5 97L1779 99.5L1776.5 100.5Z" fill="#3d8ef0"/><path d="M1780.4 102.8H1784.6L1782.5 106.2Z" fill="#444"/><rect x="1759.5" y="122.5" width="14" height="16" fill="#fff" stroke="#8a8a8a" stroke-width="0.8"/><rect x="1760" y="123" width="2.5" height="2" fill="#e24b2a"/><circle cx="1771" cy="134.5" r="5.8" fill="#4a7fd8" stroke="#2e5db0" stroke-width="0.8"/><path d="M1771.5 131H1773.5V138H1772.5V132H1771.8V138H1770.8V135Q1768.5 135 1768.5 133Q1768.5 131 1771.5 131Z" fill="#fff"/><text x="1874.4" y="87.3" font-size="9.5" fill="#262626" text-anchor="middle">Insert</text><rect x="1801" y="89.3" width="147" height="1" fill="#cfcfcf"/><rect x="1806" y="101.5" width="27.5" height="22.5" fill="#fff" stroke="#333" stroke-width="1"/><rect x="1807" y="122" width="26" height="2" fill="#999"/><text x="1808.8" y="118.5" font-size="14.5" fill="#111">A</text><rect x="1819.5" y="106.00" width="11.5" height="0.9" fill="#666"/><rect x="1819.5" y="108.60" width="11.5" height="0.9" fill="#666"/><rect x="1819.5" y="111.20" width="11.5" height="0.9" fill="#666"/><rect x="1819.5" y="113.80" width="11.5" height="0.9" fill="#666"/><rect x="1819.5" y="116.40" width="11.5" height="0.9" fill="#666"/><rect x="1819.5" y="119.00" width="11.5" height="0.9" fill="#666"/><circle cx="1806" cy="101.5" r="1.5" fill="#fff" stroke="#2c5de0" stroke-width="0.9"/><circle cx="1833.5" cy="101.5" r="1.5" fill="#fff" stroke="#2c5de0" stroke-width="0.9"/><circle cx="1806" cy="124" r="1.5" fill="#fff" stroke="#2c5de0" stroke-width="0.9"/><circle cx="1833.5" cy="124" r="1.5" fill="#fff" stroke="#2c5de0" stroke-width="0.9"/><path d="M1840.4 110.8H1844.6L1842.5 114.2Z" fill="#444"/><text x="1825" y="141.3" font-size="10.5" fill="#1a1a1a" text-anchor="middle">Text Box</text><path d="M1856.3 125.5H1874L1856.3 108.3Z" fill="#8eaee8" stroke="#5a7cc4" stroke-width="0.8"/><circle cx="1867.2" cy="105.3" r="7.3" fill="#9ab8ee" stroke="#5a7cc4" stroke-width="0.8"/><rect x="1869.3" y="107.2" width="14.5" height="15.2" fill="#9ab8f0" stroke="#5a7cc4" stroke-width="0.8"/><path d="M1888.3000000000002 110.8H1892.5L1890.4 114.2Z" fill="#444"/><text x="1874.7" y="141.3" font-size="10.5" fill="#1a1a1a" text-anchor="middle">Shape</text><path d="M1905.5 102.5H1929L1934 107.5V124.5H1905.5Z" fill="#fff" stroke="#888" stroke-width="0.9"/><rect x="1907.5" y="106" width="24" height="15.5" fill="url(#gPic)"/><path d="M1907.5 117Q1915 113 1922 116T1931.5 114.5V121.5H1907.5Z" fill="#3d8a3a"/><path d="M1938.1000000000001 110.8H1942.3L1940.2 114.2Z" fill="#444"/><text x="1924.9" y="141.3" font-size="10.5" fill="#1a1a1a" text-anchor="middle">Picture</text><text x="1982.4" y="87.3" font-size="9.5" fill="#262626" text-anchor="middle">Themes</text><rect x="1958" y="89.3" width="49" height="1" fill="#cfcfcf"/><path d="M1963.5 98.5H1985.5L1992 105V123H1963.5Z" fill="#fff" stroke="#888" stroke-width="0.9"/><text x="1965" y="112.5" font-family="Liberation Serif" font-size="14.5" fill="#3f66c0">Aa</text><rect x="1965" y="113.5" width="24" height="1" fill="#ccc"/><rect x="1965.5" y="116" width="3" height="3" fill="#4a7fd0"/><rect x="1969.6" y="116" width="3" height="3" fill="#d04a4a"/><rect x="1973.7" y="116" width="3" height="3" fill="#a05ad0"/><rect x="1977.8" y="116" width="3" height="3" fill="#5ab04a"/><rect x="1981.9" y="116" width="3" height="3" fill="#d07a3a"/><rect x="1986.0" y="116" width="3" height="3" fill="#4ab0c0"/><path d="M1996.3000000000002 109.3H2000.5L1998.4 112.7Z" fill="#444"/><text x="1983.2" y="140.3" font-size="10.5" fill="#1a1a1a" text-anchor="middle">Themes</text>
<rect x="0" y="150" width="2168" height="26" fill="#ededed"/><rect x="2.5" y="152.5" width="19" height="20.5" rx="5" fill="#fff" stroke="#e3e3e3" stroke-width="0.6"/><rect x="4.5" y="154.5" width="15" height="16.5" rx="3.5" fill="#ececec" stroke="#d8d8d8" stroke-width="0.6"/><path d="M7.5 166.3V159.4H11.2" fill="none" stroke="#111" stroke-width="1.4"/><path d="M10.8 157.3L13.5 159.4L10.8 161.5Z" fill="#111"/><path d="M14.5 164.2H18.5L16.5 167.5Z" fill="#111"/><rect x="66.5" y="154.3" width="2054" height="13.8" rx="6.9" fill="url(#gRulB)" stroke="#8fb0dc" stroke-width="0.9"/><rect x="267.5" y="154.8" width="1652.5" height="12.8" fill="url(#gRulW)"/><rect x="267.5" y="154.3" width="1652.5" height="0.8" fill="#d5d5d5"/><rect x="267.5" y="167.4" width="1652.5" height="0.8" fill="#d5d5d5"/><rect x="95.2" y="160.9" width="1.2" height="1.3" fill="#555"/><rect x="119.5" y="159.5" width="1.2" height="4" fill="#444"/><rect x="143.7" y="160.9" width="1.2" height="1.3" fill="#555"/><text x="168.6" y="165.3" font-size="9.5" fill="#333" text-anchor="middle">1</text><rect x="192.2" y="160.9" width="1.2" height="1.3" fill="#555"/><rect x="216.5" y="159.5" width="1.2" height="4" fill="#444"/><rect x="240.7" y="160.9" width="1.2" height="1.3" fill="#555"/><rect x="289.3" y="160.9" width="1.2" height="1.3" fill="#555"/><rect x="313.5" y="159.5" width="1.2" height="4" fill="#444"/><rect x="337.8" y="160.9" width="1.2" height="1.3" fill="#555"/><text x="362.6" y="165.3" font-size="9.5" fill="#333" text-anchor="middle">1</text><rect x="386.3" y="160.9" width="1.2" height="1.3" fill="#555"/><rect x="410.5" y="159.5" width="1.2" height="4" fill="#444"/><rect x="434.8" y="160.9" width="1.2" height="1.3" fill="#555"/><text x="459.6" y="165.3" font-size="9.5" fill="#333" text-anchor="middle">2</text><rect x="483.3" y="160.9" width="1.2" height="1.3" fill="#555"/><rect x="507.5" y="159.5" width="1.2" height="4" fill="#444"/><rect x="531.8" y="160.9" width="1.2" height="1.3" fill="#555"/><text x="556.7" y="165.3" font-size="9.5" fill="#333" text-anchor="middle">3</text><rect x="580.3" y="160.9" width="1.2" height="1.3" fill="#555"/><rect x="604.6" y="159.5" width="1.2" height="4" fill="#444"/><rect x="628.8" y="160.9" width="1.2" height="1.3" fill="#555"/><text x="653.7" y="165.3" font-size="9.5" fill="#333" text-anchor="middle">4</text><rect x="677.3" y="160.9" width="1.2" height="1.3" fill="#555"/><rect x="701.6" y="159.5" width="1.2" height="4" fill="#444"/><rect x="725.8" y="160.9" width="1.2" height="1.3" fill="#555"/><text x="750.7" y="165.3" font-size="9.5" fill="#333" text-anchor="middle">5</text><rect x="774.4" y="160.9" width="1.2" height="1.3" fill="#555"/><rect x="798.6" y="159.5" width="1.2" height="4" fill="#444"/><rect x="822.9" y="160.9" width="1.2" height="1.3" fill="#555"/><text x="847.7" y="165.3" font-size="9.5" fill="#333" text-anchor="middle">6</text><rect x="871.4" y="160.9" width="1.2" height="1.3" fill="#555"/><rect x="895.6" y="159.5" width="1.2" height="4" fill="#444"/><rect x="919.9" y="160.9" width="1.2" height="1.3" fill="#555"/><text x="944.7" y="165.3" font-size="9.5" fill="#333" text-anchor="middle">7</text><rect x="968.4" y="160.9" width="1.2" height="1.3" fill="#555"/><rect x="992.6" y="159.5" width="1.2" height="4" fill="#444"/><rect x="1016.9" y="160.9" width="1.2" height="1.3" fill="#555"/><text x="1041.8" y="165.3" font-size="9.5" fill="#333" text-anchor="middle">8</text><rect x="1065.4" y="160.9" width="1.2" height="1.3" fill="#555"/><rect x="1089.7" y="159.5" width="1.2" height="4" fill="#444"/><rect x="1113.9" y="160.9" width="1.2" height="1.3" fill="#555"/><text x="1138.8" y="165.3" font-size="9.5" fill="#333" text-anchor="middle">9</text><rect x="1162.4" y="160.9" width="1.2" height="1.3" fill="#555"/><rect x="1186.7" y="159.5" width="1.2" height="4" fill="#444"/><rect x="1210.9" y="160.9" width="1.2" height="1.3" fill="#555"/><text x="1235.8" y="165.3" font-size="9.5" fill="#333" text-anchor="middle">10</text><rect x="1259.5" y="160.9" width="1.2" height="1.3" fill="#555"/><rect x="1283.7" y="159.5" width="1.2" height="4" fill="#444"/><rect x="1308.0" y="160.9" width="1.2" height="1.3" fill="#555"/><text x="1332.8" y="165.3" font-size="9.5" fill="#333" text-anchor="middle">11</text><rect x="1356.5" y="160.9" width="1.2" height="1.3" fill="#555"/><rect x="1380.7" y="159.5" width="1.2" height="4" fill="#444"/><rect x="1405.0" y="160.9" width="1.2" height="1.3" fill="#555"/><text x="1429.8" y="165.3" font-size="9.5" fill="#333" text-anchor="middle">12</text><rect x="1453.5" y="160.9" width="1.2" height="1.3" fill="#555"/><rect x="1477.8" y="159.5" width="1.2" height="4" fill="#444"/><rect x="1502.0" y="160.9" width="1.2" height="1.3" fill="#555"/><text x="1526.9" y="165.3" font-size="9.5" fill="#333" text-anchor="middle">13</text><rect x="1550.5" y="160.9" width="1.2" height="1.3" fill="#555"/><rect x="1574.8" y="159.5" width="1.2" height="4" fill="#444"/><rect x="1599.0" y="160.9" width="1.2" height="1.3" fill="#555"/><text x="1623.9" y="165.3" font-size="9.5" fill="#333" text-anchor="middle">14</text><rect x="1647.5" y="160.9" width="1.2" height="1.3" fill="#555"/><rect x="1671.8" y="159.5" width="1.2" height="4" fill="#444"/><rect x="1696.0" y="160.9" width="1.2" height="1.3" fill="#555"/><text x="1720.9" y="165.3" font-size="9.5" fill="#333" text-anchor="middle">15</text><rect x="1744.6" y="160.9" width="1.2" height="1.3" fill="#555"/><rect x="1768.8" y="159.5" width="1.2" height="4" fill="#444"/><rect x="1793.1" y="160.9" width="1.2" height="1.3" fill="#555"/><text x="1817.9" y="165.3" font-size="9.5" fill="#333" text-anchor="middle">16</text><rect x="1841.6" y="160.9" width="1.2" height="1.3" fill="#555"/><rect x="1865.8" y="159.5" width="1.2" height="4" fill="#444"/><rect x="1890.1" y="160.9" width="1.2" height="1.3" fill="#555"/><rect x="1938.6" y="160.9" width="1.2" height="1.3" fill="#555"/><rect x="1962.8" y="159.5" width="1.2" height="4" fill="#444"/><rect x="1987.1" y="160.9" width="1.2" height="1.3" fill="#555"/><text x="2012.0" y="165.3" font-size="9.5" fill="#333" text-anchor="middle">18</text><rect x="2035.6" y="160.9" width="1.2" height="1.3" fill="#555"/><rect x="2059.9" y="159.5" width="1.2" height="4" fill="#444"/><rect x="2084.1" y="160.9" width="1.2" height="1.3" fill="#555"/><text x="2109.0" y="165.3" font-size="9.5" fill="#333" text-anchor="middle">19</text><rect x="71.3" y="158.5" width="1" height="6" fill="#444"/><rect x="390.0" y="171.5" width="1" height="3.2" fill="#555"/><rect x="513.6" y="171.5" width="1" height="3.2" fill="#555"/><rect x="637.1" y="171.5" width="1" height="3.2" fill="#555"/><rect x="760.7" y="171.5" width="1" height="3.2" fill="#555"/><rect x="884.2" y="171.5" width="1" height="3.2" fill="#555"/><rect x="1007.7" y="171.5" width="1" height="3.2" fill="#555"/><rect x="1131.3" y="171.5" width="1" height="3.2" fill="#555"/><rect x="1254.8" y="171.5" width="1" height="3.2" fill="#555"/><rect x="1378.4" y="171.5" width="1" height="3.2" fill="#555"/><rect x="1501.9" y="171.5" width="1" height="3.2" fill="#555"/><rect x="1625.4" y="171.5" width="1" height="3.2" fill="#555"/><rect x="1749.0" y="171.5" width="1" height="3.2" fill="#555"/><rect x="1872.5" y="171.5" width="1" height="3.2" fill="#555"/><path d="M262.8 154.3H272.2L267.5 161.2Z" fill="#a9c8f5" stroke="#3d6bc0" stroke-width="0.9"/><path d="M262.8 168.5H272.2L267.5 161.6Z" fill="#a9c8f5" stroke="#3d6bc0" stroke-width="0.9"/><rect x="263" y="169.5" width="9" height="5.5" rx="1.5" fill="#a9c8f5" stroke="#3d6bc0" stroke-width="0.9"/><rect x="263" y="171.8" width="9" height="0.8" fill="#3d6bc0"/><path d="M1916 167.5H1924L1924 164.5L1920 160.5L1916 164.5Z" fill="#c5dcfa" stroke="#3d6bc0" stroke-width="0.9"/><rect x="1919.5" y="154.5" width="0.8" height="13" fill="#6d7fa0"/><rect x="2153.5" y="150.5" width="14" height="11" fill="#dbe6f8" stroke="#3a64c8" stroke-width="0.9"/><rect x="2154" y="153.5" width="13" height="0.9" fill="#3a64c8"/><rect x="2154" y="157" width="13" height="0.9" fill="#3a64c8"/>
</svg>
<div style="position:absolute;left:590.60px;top:98px;width:65px;height:28.5px;overflow:hidden;white-space:nowrap"><span style="position:absolute;left:0;width:65px;top:-3.55px;line-height:30px;height:30px;display:block;text-align:center;white-space:nowrap;font-family:Liberation Serif;font-size:12px;color:#111">AaBbCcDdE</span></div><div style="position:absolute;left:666.55px;top:98px;width:65px;height:28.5px;overflow:hidden;white-space:nowrap"><span style="position:absolute;left:0;width:65px;top:-1.37px;line-height:30px;height:30px;display:block;text-align:center;white-space:nowrap;font-family:Liberation Sans;font-weight:bold;font-size:15.5px;color:#2e6db4">AaBbCcI</span></div><div style="position:absolute;left:742.50px;top:98px;width:65px;height:28.5px;overflow:hidden;white-space:nowrap"><span style="position:absolute;left:0;width:65px;top:-1.03px;line-height:30px;height:30px;display:block;text-align:center;white-space:nowrap;font-family:Liberation Sans;font-weight:bold;font-size:12.5px;color:#3d9cf2">AaBbCcDd</span></div><div style="position:absolute;left:818.45px;top:98px;width:65px;height:28.5px;overflow:hidden;white-space:nowrap"><span style="position:absolute;left:0;width:65px;top:-1.06px;line-height:30px;height:30px;display:block;text-align:center;white-space:nowrap;font-family:Liberation Sans;font-size:25px;color:#6f6f6f">AaBb</span></div><div style="position:absolute;left:894.40px;top:98px;width:65px;height:28.5px;overflow:hidden;white-space:nowrap"><span style="position:absolute;left:0;width:65px;top:-1.33px;line-height:30px;height:30px;display:block;text-align:center;white-space:nowrap;font-family:Liberation Sans;font-style:italic;font-size:12.5px;color:#45a2f5;letter-spacing:0.6px">AaBbCcDdE</span></div><div style="position:absolute;left:970.35px;top:98px;width:65px;height:28.5px;overflow:hidden;white-space:nowrap"><span style="position:absolute;left:0;width:65px;top:-2.55px;line-height:30px;height:30px;display:block;text-align:center;white-space:nowrap;font-family:Liberation Serif;font-style:italic;font-size:12px;color:#8a8a8a">AaBbCcDdEe</span></div><div style="position:absolute;left:1046.30px;top:98px;width:65px;height:28.5px;overflow:hidden;white-space:nowrap"><span style="position:absolute;left:0;width:65px;top:-2.55px;line-height:30px;height:30px;display:block;text-align:center;white-space:nowrap;font-family:Liberation Serif;font-style:italic;font-size:12px;color:#111">AaBbCcDdEe</span></div><div style="position:absolute;left:1122.25px;top:98px;width:65px;height:28.5px;overflow:hidden;white-space:nowrap"><span style="position:absolute;left:0;width:65px;top:-2.55px;line-height:30px;height:30px;display:block;text-align:center;white-space:nowrap;font-family:Liberation Serif;font-style:italic;font-weight:bold;font-size:12px;color:#3d9cf2">AaBbCcDdE</span></div><div style="position:absolute;left:1198.20px;top:98px;width:65px;height:28.5px;overflow:hidden;white-space:nowrap"><span style="position:absolute;left:0;width:65px;top:-2.55px;line-height:30px;height:30px;display:block;text-align:center;white-space:nowrap;font-family:Liberation Serif;font-weight:bold;font-size:12px;color:#111">AaBbCcDdE</span></div><div style="position:absolute;left:1274.15px;top:98px;width:65px;height:28.5px;overflow:hidden;white-space:nowrap"><span style="position:absolute;left:0;width:65px;top:-2.55px;line-height:30px;height:30px;display:block;text-align:center;white-space:nowrap;font-family:Liberation Serif;font-style:italic;font-size:12px;color:#111">AaBbCcDdEe</span></div><div style="position:absolute;left:1350.10px;top:98px;width:65px;height:28.5px;overflow:hidden;white-space:nowrap"><span style="position:absolute;left:0;width:65px;top:-2.55px;line-height:30px;height:30px;display:block;text-align:center;white-space:nowrap;font-family:Liberation Serif;font-style:italic;font-weight:bold;font-size:12px;color:#3d9cf2">AaBbCcDdE</span></div><div style="position:absolute;left:1426.05px;top:98px;width:65px;height:28.5px;overflow:hidden;white-space:nowrap"><span style="position:absolute;left:0;width:65px;top:-2.55px;line-height:30px;height:30px;display:block;text-align:center;white-space:nowrap;font-family:Liberation Serif;font-variant:small-caps;font-size:12px;color:#4fd4bf">AaBbCcDdE</span></div><div style="position:absolute;left:1502.00px;top:98px;width:65px;height:28.5px;overflow:hidden;white-space:nowrap"><span style="position:absolute;left:0;width:65px;top:-2.55px;line-height:30px;height:30px;display:block;text-align:center;white-space:nowrap;font-family:Liberation Serif;font-variant:small-caps;font-weight:bold;font-size:12px;color:#4fd4bf">AaBbCcDdE</span></div><div style="position:absolute;left:1577.95px;top:98px;width:65px;height:28.5px;overflow:hidden;white-space:nowrap"><span style="position:absolute;left:0;width:65px;top:-2.55px;line-height:30px;height:30px;display:block;text-align:center;white-space:nowrap;font-family:Liberation Serif;font-variant:small-caps;font-weight:bold;font-size:12px;color:#111">AaBbCcDdE</span></div><div style="position:absolute;left:1653.90px;top:98px;width:65px;height:28.5px;overflow:hidden;white-space:nowrap"><span style="position:absolute;left:0;width:65px;top:-2.55px;line-height:30px;height:30px;display:block;text-align:center;white-space:nowrap;font-family:Liberation Serif;font-size:12px;color:#111">AaBbCcDdE</span></div>
<div id="doc"><div style="position:absolute;left:0;top:-176px;width:2168px;height:1364px">
<div class="abs" style="left:697px;top:423.35px;width:377.8px;height:37.8px;background:#c8dcfa"></div>
<div class="pe" style="left:278px;top:182px"><svg class="pil" width="11" height="11" viewBox="0 0 11 11"><use href="#pilc"/></svg></div>
<div class="ln lj" style="top:232.27px">to<span class="sp"> </span>the<span class="sp"> </span>east,<span class="sp"> </span>saw<span class="sp"> </span>a<span class="sp"> </span>gradual<span class="sp"> </span>swelling<span class="sp"> </span>of<span class="sp"> </span>the<span class="sp"> </span>population<span class="sp"> </span>to<span class="sp"> </span>more<span class="sp"> </span>than<span class="sp"> </span>1200<span class="sp"> </span>people<span class="sp"> </span>by<span class="sp"> </span>1871.<span class="sp"> </span>Given<span class="sp"> </span>those</div>
<div class="abs" style="left:1924px;top:254px;width:1.3px;height:1.3px;background:#5a5a5a"></div>
<div class="ln lj" style="top:270.00px">numbers,<span class="sp"> </span>an<span class="sp"> </span>expanded<span class="sp"> </span>Forest<span class="sp"> </span>Lodge<span class="fn" style="width:11px"><span>6</span></span>,was<span class="sp"> </span>added<span class="sp"> </span>to<span class="sp"> </span>the<span class="sp"> </span>borough<span class="sp"> </span>as<span class="sp"> </span>a<span class="sp"> </span>fourth<span class="sp"> </span>ward<span class="sp"> </span>with<span class="sp"> </span>a<span class="sp"> </span>three-person</div>
<div class="abs" style="left:1924px;top:291px;width:1.3px;height:1.3px;background:#5a5a5a"></div>
<div class="ln ll" style="top:307.73px">representation<span class="sp"> </span>on<span class="sp"> </span>council.<span class="fn" style="width:11px"><span>7</span></span> <span class="pm"><svg class="pil" width="11" height="11" viewBox="0 0 11 11"><use href="#pilc"/></svg></span></div>
<div class="pe" style="left:278px;top:357.19px"><svg class="pil" width="11" height="11" viewBox="0 0 11 11"><use href="#pilc"/></svg></div>
<div class="ln lj" style="top:383.19px">The<span class="sp"> </span>dimensions<span class="sp"> </span>of<span class="sp"> </span>the<span class="sp"> </span>Forest<span class="sp"> </span>Lodge<span class="sp"> </span>ward<span class="sp"> </span>are<span class="sp"> </span>exhibited<span class="sp"> </span>in<span class="sp"> </span>the<span class="sp"> </span>“Atlas<span class="sp"> </span>of<span class="sp"> </span>the<span class="sp"> </span>City<span class="sp"> </span>of<span class="sp"> </span>Sydney<span class="sp"> </span>-<span class="sp"> </span>Glebe”<span class="sp"> </span>map</div>
<div class="abs" style="left:1924px;top:405px;width:1.3px;height:1.3px;background:#5a5a5a"></div>
<div class="ln ll" style="top:420.92px">published<span class="sp"> </span>in<span class="sp"> </span>1888<span class="sp"> </span>as<span class="sp"> </span>shown<span class="sp"> </span><span class="sel"><span class="or2">above/below/opposite</span>.<span class="or2">14</span></span> <span class="pm"><svg class="pil" width="11" height="11" viewBox="0 0 11 11"><use href="#pilc"/></svg></span></div>
<div class="pe" style="left:278px;top:470.38px"><svg class="pil" width="11" height="11" viewBox="0 0 11 11"><use href="#pilc"/></svg></div>
<div class="ln lc" style="top:496.38px"><span class="cw"><span class="or">[PIC<span class="sp"> </span>14<span class="sp"> </span>QUARTER<span class="sp"> </span>PAGE<span class="sp"> </span>ABOUT<span class="sp"> </span>HERE]</span><span class="pma"><svg class="pil" width="11" height="11" viewBox="0 0 11 11"><use href="#pilc"/></svg></span></span></div>
<div class="pe" style="left:1104px;top:545.84px"><svg class="pil" width="11" height="11" viewBox="0 0 11 11"><use href="#pilc"/></svg></div>
<div class="ln lc" style="top:571.84px"><span class="cw">The<span class="sp"> </span>Glebe<span class="sp"> </span>-<span class="sp"> </span>Parish<span class="sp"> </span>of<span class="sp"> </span>Petersham<span class="sp"> </span>1888<span class="pma"><svg class="pil" width="11" height="11" viewBox="0 0 11 11"><use href="#pilc"/></svg></span></span></div>
<div class="pe" style="left:1104px;top:621.30px"><svg class="pil" width="11" height="11" viewBox="0 0 11 11"><use href="#pilc"/></svg></div>
<div class="ln lc" style="top:647.30px"><span class="cw">[City<span class="sp"> </span>of<span class="sp"> </span>Sydney<span class="sp"> </span>Archives]<span class="pma"><svg class="pil" width="11" height="11" viewBox="0 0 11 11"><use href="#pilc"/></svg></span></span></div>
<div class="pe" style="left:278px;top:696.76px"><svg class="pil" width="11" height="11" viewBox="0 0 11 11"><use href="#pilc"/></svg></div>
<div class="ln lj" style="top:722.76px">The<span class="sp"> </span>new<span class="sp"> </span>ward<span class="sp"> </span>quickly<span class="sp"> </span>developed<span class="sp"> </span>its<span class="sp"> </span>own<span class="sp"> </span>distinct<span class="sp"> </span>character.<span class="sp"> </span>By<span class="sp"> </span>1891<span class="sp"> </span>it<span class="sp"> </span>had<span class="sp"> </span>a<span class="sp"> </span>population<span class="sp"> </span>of<span class="sp"> </span>around<span class="sp"> </span>2500</div>
<div class="abs" style="left:1924px;top:744px;width:1.3px;height:1.3px;background:#5a5a5a"></div>
<div class="ln lj" style="top:760.49px">people<span class="sp"> </span>living<span class="sp"> </span>in<span class="sp"> </span>539<span class="sp"> </span>dwellings<span class="fn" style="width:11px"><span>8</span></span>,<span class="sp"> </span>many<span class="sp"> </span>of<span class="sp"> </span>which<span class="sp"> </span>were<span class="sp"> </span>single<span class="sp"> </span>or<span class="sp"> </span>two-storey<span class="sp"> </span>terraces<span class="sp"> </span>with<span class="sp"> </span>front<span class="sp"> </span>doors<span class="sp"> </span>opening</div>
<div class="abs" style="left:1924px;top:782px;width:1.3px;height:1.3px;background:#5a5a5a"></div>
<div class="ln lj" style="top:798.22px">directly<span class="sp"> </span>onto<span class="sp"> </span>the<span class="sp"> </span>streets,<span class="sp"> </span>or<span class="sp"> </span>with<span class="sp"> </span>narrow<span class="sp"> </span>front<span class="sp"> </span>porches<span class="sp"> </span>and<span class="sp"> </span>minimal,<span class="sp"> </span>if<span class="sp"> </span>any,<span class="sp"> </span>yardage<span class="sp"> </span>at<span class="sp"> </span>the<span class="sp"> </span>rear.<span class="sp"> </span>The<span class="sp"> </span>great</div>
<div class="abs" style="left:1924px;top:820px;width:1.3px;height:1.3px;background:#5a5a5a"></div>
<div class="ln lj" style="top:835.95px">majority<span class="sp"> </span>of<span class="sp"> </span>these<span class="sp"> </span>houses<span class="sp"> </span>were<span class="sp"> </span>tenanted,<span class="sp"> </span>rather<span class="sp"> </span>than<span class="sp"> </span>owned,<span class="sp"> </span>by<span class="sp"> </span>working-class<span class="sp"> </span>people<span class="sp"> </span>with<span class="sp"> </span>modest</div>
<div class="abs" style="left:1924px;top:857px;width:1.3px;height:1.3px;background:#5a5a5a"></div>
<div class="ln lj" style="top:873.68px">pretensions,<span class="sp"> </span>but<span class="sp"> </span>with<span class="sp"> </span>a<span class="sp"> </span>determination<span class="sp"> </span>to<span class="sp"> </span>secure<span class="sp"> </span>their<span class="sp"> </span>future,<span class="sp"> </span>and<span class="sp"> </span>those<span class="sp"> </span>of<span class="sp"> </span>their<span class="sp"> </span>children,<span class="sp"> </span>through<span class="sp"> </span>earnest</div>
<div class="abs" style="left:1924px;top:895px;width:1.3px;height:1.3px;background:#5a5a5a"></div>
<div class="ln lj" style="top:911.41px">endeavour.<span class="sp"> </span>More<span class="sp"> </span>impressive<span class="sp"> </span>‘set<span class="sp"> </span>back’,<span class="sp"> </span>two-storey<span class="sp"> </span>buildings,<span class="sp"> </span>frequently<span class="sp"> </span>built<span class="sp"> </span>in<span class="sp"> </span>rows,<span class="sp"> </span>and<span class="sp"> </span>often</div>
<div class="abs" style="left:1924px;top:933px;width:1.3px;height:1.3px;background:#5a5a5a"></div>
<div class="ln lj" style="top:949.14px">incorporating<span class="sp"> </span>ornate<span class="sp"> </span>architectural<span class="sp"> </span>designs<span class="sp"> </span>with<span class="sp"> </span>footings<span class="sp"> </span>on<span class="sp"> </span>spacious<span class="sp"> </span>grounds<span class="sp"> </span>with<span class="sp"> </span>elaborate<span class="sp"> </span>gardens,<span class="sp"> </span>were</div>
<div class="abs" style="left:1924px;top:971px;width:1.3px;height:1.3px;background:#5a5a5a"></div>
<div class="ln ll" style="top:986.87px">owned<span class="sp"> </span>and<span class="sp"> </span>occupied<span class="sp"> </span>by<span class="sp"> </span>members<span class="sp"> </span>of<span class="sp"> </span>“the<span class="sp"> </span>classes”.<span class="fn" style="width:11px"><span>9</span></span><span class="sp"> </span> <span class="pm" style="margin-left:9.43px"><svg class="pil" width="11" height="11" viewBox="0 0 11 11"><use href="#pilc"/></svg></span></div>
<div class="pe" style="left:278px;top:1036.33px"><svg class="pil" width="11" height="11" viewBox="0 0 11 11"><use href="#pilc"/></svg></div>
<div class="ln lj" style="top:1062.33px">Shown<span class="sp"> </span><span class="or">above/below/opposite</span><span class="sp"> </span>is<span class="sp"> </span>a<span class="sp"> </span>watercolour<span class="sp"> </span>painting<span class="sp"> </span>(circa<span class="sp"> </span>1980)<span class="sp"> </span>by<span class="sp"> </span>Sydney<span class="sp"> </span>artist<span class="sp"> </span>Bob<span class="sp"> </span>Phillips<span class="sp"> </span>simply</div>
<div class="abs" style="left:1924px;top:1084px;width:1.3px;height:1.3px;background:#5a5a5a"></div>
<div class="ln lj" style="top:1100.06px">entitled<span class="sp"> </span>“Glebe”.<span class="sp"> </span>It<span class="sp"> </span>“captures<span class="sp"> </span>the<span class="sp"> </span>feel<span class="sp"> </span>of<span class="sp"> </span>the<span class="sp"> </span>terrace<span class="sp"> </span>houses<span class="sp"> </span>[of<span class="sp"> </span>the<span class="sp"> </span>late<span class="sp"> </span>19th<span class="sp"> </span>Century]<span class="sp"> </span>with<span class="sp"> </span>characteristic</div>
<div class="abs" style="left:1924px;top:1121px;width:1.3px;height:1.3px;background:#5a5a5a"></div>
<div class="ln ll" style="top:1137.79px">shutters,<span class="sp"> </span>screens<span class="sp"> </span>and<span class="sp"> </span>iron<span class="sp"> </span>tracery”.<span class="fn" style="width:22px"><span>10</span></span><span class="sp"> </span><span class="or">15</span> <span class="pm"><svg class="pil" width="11" height="11" viewBox="0 0 11 11"><use href="#pilc"/></svg></span></div>
<div class="pe" style="left:278px;top:1187.25px"><svg class="pil" width="11" height="11" viewBox="0 0 11 11"><use href="#pilc"/></svg></div>
<div class="ln lc" style="top:1213.25px"><span class="cw"><span class="or">[PIC<span class="sp"> </span>15<span class="sp"> </span>QUARTER<span class="sp"> </span>PAGE<span class="sp"> </span>ABOUT<span class="sp"> </span>HERE]</span><span class="pma"><svg class="pil" width="11" height="11" viewBox="0 0 11 11"><use href="#pilc"/></svg></span></span></div>
<div class="pe" style="left:1104px;top:1262.71px"><svg class="pil" width="11" height="11" viewBox="0 0 11 11"><use href="#pilc"/></svg></div>
<div class="ln lc" style="top:1288.71px"><span class="cw">“Glebe”<span class="pma"><svg class="pil" width="11" height="11" viewBox="0 0 11 11"><use href="#pilc"/></svg></span></span></div>
</div></div>
<svg class="abs" style="left:0;top:0;pointer-events:none" width="2168" height="1364" viewBox="0 0 2168 1364" font-family="Liberation Sans"><defs>
<linearGradient id="gGray2" gradientUnits="userSpaceOnUse" x1="0" y1="176" x2="0" y2="640"><stop offset="0" stop-color="#c1c5cf"/><stop offset="0.25" stop-color="#b9bec9"/><stop offset="1" stop-color="#9ca2ae"/></linearGradient>
<linearGradient id="gGrayEdge" x1="0" y1="0" x2="1" y2="0"><stop offset="0" stop-color="#868b96"/><stop offset="1" stop-color="#a0a5b0" stop-opacity="0"/></linearGradient><linearGradient id="gGrayTop" x1="0" y1="0" x2="0" y2="1"><stop offset="0" stop-color="#8c909a"/><stop offset="1" stop-color="#a5aab4" stop-opacity="0"/></linearGradient><linearGradient id="gGrayR" x1="0" y1="0" x2="1" y2="0"><stop offset="0" stop-color="#9aa0ab" stop-opacity="0"/><stop offset="1" stop-color="#838893"/></linearGradient>
<linearGradient id="gVR" x1="0" y1="0" x2="1" y2="0"><stop offset="0" stop-color="#d0e3f9"/><stop offset="1" stop-color="#a5c0e6"/></linearGradient>
<linearGradient id="gVRW" x1="0" y1="0" x2="1" y2="0"><stop offset="0" stop-color="#fdfdfd"/><stop offset="1" stop-color="#e3e3e3"/></linearGradient>
<linearGradient id="gSt" x1="0" y1="0" x2="0" y2="1"><stop offset="0" stop-color="#ececec"/><stop offset="1" stop-color="#dcdcdc"/></linearGradient>
<linearGradient id="gVB" x1="0" y1="0" x2="0" y2="1"><stop offset="0" stop-color="#fbfbfb"/><stop offset="1" stop-color="#dedede"/></linearGradient>
</defs><rect x="0" y="176" width="22" height="1156" fill="#efefef"/><rect x="4.2" y="176.2" width="13.4" height="1155" fill="url(#gVRW)" stroke="#bdbdbd" stroke-width="0.8"/><rect x="4.2" y="176.2" width="13.4" height="60.5" fill="url(#gVR)" stroke="#8fb0dc" stroke-width="0.8"/><rect x="4" y="236" width="13.6" height="0.9" fill="#8fb0dc"/><rect x="9.2" y="187.4" width="3.6" height="1" fill="#555"/><rect x="10.4" y="211.6" width="1.1" height="1.1" fill="#666"/><rect x="10.4" y="260.2" width="1.1" height="1.1" fill="#666"/><rect x="9.2" y="284.4" width="3.6" height="1" fill="#555"/><rect x="10.4" y="308.7" width="1.1" height="1.1" fill="#666"/><text transform="translate(13.5 333.4) rotate(-90)" font-size="9" fill="#333" text-anchor="middle">1</text><rect x="10.4" y="357.2" width="1.1" height="1.1" fill="#666"/><rect x="9.2" y="381.4" width="3.6" height="1" fill="#555"/><rect x="10.4" y="405.7" width="1.1" height="1.1" fill="#666"/><text transform="translate(13.5 430.4) rotate(-90)" font-size="9" fill="#333" text-anchor="middle">2</text><rect x="10.4" y="454.2" width="1.1" height="1.1" fill="#666"/><rect x="9.2" y="478.4" width="3.6" height="1" fill="#555"/><rect x="10.4" y="502.7" width="1.1" height="1.1" fill="#666"/><text transform="translate(13.5 527.5) rotate(-90)" font-size="9" fill="#333" text-anchor="middle">3</text><rect x="10.4" y="551.2" width="1.1" height="1.1" fill="#666"/><rect x="9.2" y="575.5" width="3.6" height="1" fill="#555"/><rect x="10.4" y="599.7" width="1.1" height="1.1" fill="#666"/><text transform="translate(13.5 624.5) rotate(-90)" font-size="9" fill="#333" text-anchor="middle">4</text><rect x="10.4" y="648.2" width="1.1" height="1.1" fill="#666"/><rect x="9.2" y="672.5" width="3.6" height="1" fill="#555"/><rect x="10.4" y="696.7" width="1.1" height="1.1" fill="#666"/><text transform="translate(13.5 721.5) rotate(-90)" font-size="9" fill="#333" text-anchor="middle">5</text><rect x="10.4" y="745.3" width="1.1" height="1.1" fill="#666"/><rect x="9.2" y="769.5" width="3.6" height="1" fill="#555"/><rect x="10.4" y="793.8" width="1.1" height="1.1" fill="#666"/><text transform="translate(13.5 818.5) rotate(-90)" font-size="9" fill="#333" text-anchor="middle">6</text><rect x="10.4" y="842.3" width="1.1" height="1.1" fill="#666"/><rect x="9.2" y="866.5" width="3.6" height="1" fill="#555"/><rect x="10.4" y="890.8" width="1.1" height="1.1" fill="#666"/><text transform="translate(13.5 915.5) rotate(-90)" font-size="9" fill="#333" text-anchor="middle">7</text><rect x="10.4" y="939.3" width="1.1" height="1.1" fill="#666"/><rect x="9.2" y="963.5" width="3.6" height="1" fill="#555"/><rect x="10.4" y="987.8" width="1.1" height="1.1" fill="#666"/><text transform="translate(13.5 1012.6) rotate(-90)" font-size="9" fill="#333" text-anchor="middle">8</text><rect x="10.4" y="1036.3" width="1.1" height="1.1" fill="#666"/><rect x="9.2" y="1060.6" width="3.6" height="1" fill="#555"/><rect x="10.4" y="1084.8" width="1.1" height="1.1" fill="#666"/><text transform="translate(13.5 1109.6) rotate(-90)" font-size="9" fill="#333" text-anchor="middle">9</text><rect x="10.4" y="1133.3" width="1.1" height="1.1" fill="#666"/><rect x="9.2" y="1157.6" width="3.6" height="1" fill="#555"/><rect x="10.4" y="1181.8" width="1.1" height="1.1" fill="#666"/><text transform="translate(13.5 1206.6) rotate(-90)" font-size="9" fill="#333" text-anchor="middle">10</text><rect x="10.4" y="1230.4" width="1.1" height="1.1" fill="#666"/><rect x="9.2" y="1254.6" width="3.6" height="1" fill="#555"/><rect x="10.4" y="1278.9" width="1.1" height="1.1" fill="#666"/><text transform="translate(13.5 1303.6) rotate(-90)" font-size="9" fill="#333" text-anchor="middle">11</text><rect x="10.4" y="1327.4" width="1.1" height="1.1" fill="#666"/><rect x="22" y="176" width="51" height="1156" fill="url(#gGray2)"/><rect x="22" y="176" width="4" height="1156" fill="url(#gGrayEdge)"/><rect x="22" y="176" width="51" height="3" fill="url(#gGrayTop)"/><rect x="70" y="176" width="3" height="1156" fill="url(#gGrayR)"/><rect x="2114" y="176" width="39.5" height="1156" fill="url(#gGray2)"/><rect x="2114" y="176" width="4" height="1156" fill="url(#gGrayEdge)"/><rect x="2114" y="176" width="39.5" height="3" fill="url(#gGrayTop)"/><rect x="2150.5" y="176" width="3" height="1156" fill="url(#gGrayR)"/><rect x="2153.5" y="176" width="14.5" height="1156" fill="#f6f6f6"/><rect x="2153.5" y="176" width="0.8" height="1156" fill="#e2e2e2"/><rect x="2157.3" y="282.5" width="7.3" height="41" rx="3.6" fill="#c4c4c4"/><rect x="2153.8" y="1284.5" width="14" height="46" rx="4" fill="url(#gVB)" stroke="#a9a9a9" stroke-width="0.8"/><rect x="2154" y="1299.5" width="14" height="0.8" fill="#bdbdbd"/><rect x="2154" y="1314.5" width="14" height="0.8" fill="#bdbdbd"/><path d="M2157.5 1291.5L2160.8 1288.3L2164 1291.5ZM2157.5 1295.3L2160.8 1292.1L2164 1295.3Z" fill="#111"/><circle cx="2160.8" cy="1307.2" r="3.3" fill="#fff" stroke="#333" stroke-width="0.9"/><path d="M2157.5 1318.8L2160.8 1322L2164 1318.8ZM2157.5 1322.6L2160.8 1325.8L2164 1322.6Z" fill="#111"/><rect x="0" y="1331" width="2168" height="33" fill="#eeeeee"/><rect x="3.5" y="1336.5" width="170.5" height="23.5" rx="4" fill="url(#gBtn)" stroke="#a0a0a0" stroke-width="1"/><rect x="88.3" y="1337" width="28.4" height="22.5" fill="#707070"/><rect x="31.9" y="1337" width="1" height="22.5" fill="#a5a5a5"/><rect x="60.1" y="1337" width="1" height="22.5" fill="#a5a5a5"/><rect x="87.8" y="1337" width="1" height="22.5" fill="#a5a5a5"/><rect x="116.2" y="1337" width="1" height="22.5" fill="#a5a5a5"/><rect x="144.3" y="1337" width="1" height="22.5" fill="#a5a5a5"/><rect x="11.8" y="1343.3" width="13.8" height="1.5" fill="#1a1a1a"/><rect x="11.8" y="1346.2" width="13.8" height="1.5" fill="#1a1a1a"/><rect x="11.8" y="1349.1" width="13.8" height="1.5" fill="#1a1a1a"/><rect x="11.8" y="1352.0" width="13.8" height="1.5" fill="#1a1a1a"/><rect x="38" y="1343.2" width="2" height="1.5" fill="#1a1a1a"/><rect x="41" y="1343.2" width="12" height="1.5" fill="#1a1a1a"/><rect x="41" y="1346.2" width="2" height="1.5" fill="#1a1a1a"/><rect x="44" y="1346.2" width="9" height="1.5" fill="#1a1a1a"/><rect x="41" y="1349.2" width="2" height="1.5" fill="#1a1a1a"/><rect x="44" y="1349.2" width="10.5" height="1.5" fill="#1a1a1a"/><rect x="66.3" y="1342.3" width="16.3" height="11.5" rx="2" fill="#2d2d2d"/><rect x="68" y="1344" width="12.8" height="8" fill="none" stroke="#bbb" stroke-width="0.6" stroke-dasharray="1 1"/><path d="M72.5 1343.5V1352L74.6 1350L76.5 1353.2L77.5 1352.6L75.8 1349.5H78.3Z" fill="#fff" stroke="#111" stroke-width="0.4"/><rect x="93.8" y="1342" width="17" height="12.3" rx="2" fill="#5a9ff2" stroke="#3a7ad6" stroke-width="0.6"/><rect x="95.5" y="1344.3" width="13.5" height="1.4" fill="#1a3f8a"/><rect x="95.5" y="1347.5" width="13.5" height="1.4" fill="#1a3f8a"/><rect x="95.5" y="1350.7" width="13.5" height="1.4" fill="#1a3f8a"/><rect x="123.3" y="1342.2" width="14.6" height="12" rx="2.2" fill="#2d2d2d"/><rect x="126.5" y="1344.8" width="10" height="0.9" fill="#aaa"/><rect x="126.5" y="1347.7" width="10" height="0.9" fill="#aaa"/><rect x="126.5" y="1350.6" width="10" height="0.9" fill="#aaa"/><rect x="125.3" y="1342.5" width="0.8" height="11.5" fill="#aaa"/><rect x="150.8" y="1342.2" width="16.2" height="12" rx="2" fill="#2d2d2d"/><path d="M153 1344.2L156.5 1347.7M153 1344.2H155.5M153 1344.2V1346.7M164.8 1352.2L161.3 1348.7M164.8 1352.2H162.3M164.8 1352.2V1349.7" stroke="#fff" stroke-width="0.9"/><rect x="178.8" y="1331" width="1989" height="15.5" fill="#f6f6f6"/><rect x="179.3" y="1334.7" width="1962.5" height="8.2" rx="4.1" fill="#c2c2c2"/><rect x="178.8" y="1346.5" width="1989.2" height="17.5" fill="url(#gSt)"/><rect x="178.8" y="1346.3" width="1989.2" height="0.9" fill="#b3b3b3"/><rect x="297.7" y="1347" width="1" height="17" fill="#b6b6b6"/><rect x="298.7" y="1347" width="1" height="17" fill="#f6f6f6"/><rect x="351.2" y="1347" width="1" height="17" fill="#b6b6b6"/><rect x="352.2" y="1347" width="1" height="17" fill="#f6f6f6"/><rect x="479.0" y="1347" width="1" height="17" fill="#b6b6b6"/><rect x="480.0" y="1347" width="1" height="17" fill="#f6f6f6"/><rect x="622.7" y="1347" width="1" height="17" fill="#b6b6b6"/><rect x="623.7" y="1347" width="1" height="17" fill="#f6f6f6"/><rect x="663.0" y="1347" width="1" height="17" fill="#b6b6b6"/><rect x="664.0" y="1347" width="1" height="17" fill="#f6f6f6"/><text x="183.6" y="1359" font-size="10.6" fill="#262626" letter-spacing="0.15">Print Layout View</text><text x="305" y="1359" font-size="10.6" fill="#262626" letter-spacing="0.15">Sec</text><text x="346" y="1359" font-size="10.6" fill="#262626" letter-spacing="0.15" text-anchor="end">1</text><text x="362.3" y="1359" font-size="10.6" fill="#262626" letter-spacing="0.15">Pages:</text><text x="420.4" y="1359" font-size="10.6" fill="#262626" letter-spacing="0.15">2 of 10</text><text x="489.2" y="1359" font-size="10.6" fill="#262626" letter-spacing="0.15">Words:</text><text x="557" y="1359" font-size="10.6" fill="#262626" letter-spacing="0.15">1 of 6735</text><text x="1996.8" y="1359.5" font-size="10.8" fill="#111" letter-spacing="0.3">343%</text><rect x="2040.5" y="1352.5" width="96.5" height="2.4" rx="1.2" fill="#b5b5b5" stroke="#7a7a7a" stroke-width="0.7"/><circle cx="2117.7" cy="1353.6" r="4.8" fill="#f4f4f4" stroke="#8d8d8d" stroke-width="0.8"/><circle cx="2117.7" cy="1353.6" r="1.1" fill="#666"/><path d="M2157.5 1363L2167 1353.5M2161.5 1363L2167 1357.5M2165 1363L2167 1361" stroke="#9a9a9a" stroke-width="0.8"/></svg>
</body></html>
